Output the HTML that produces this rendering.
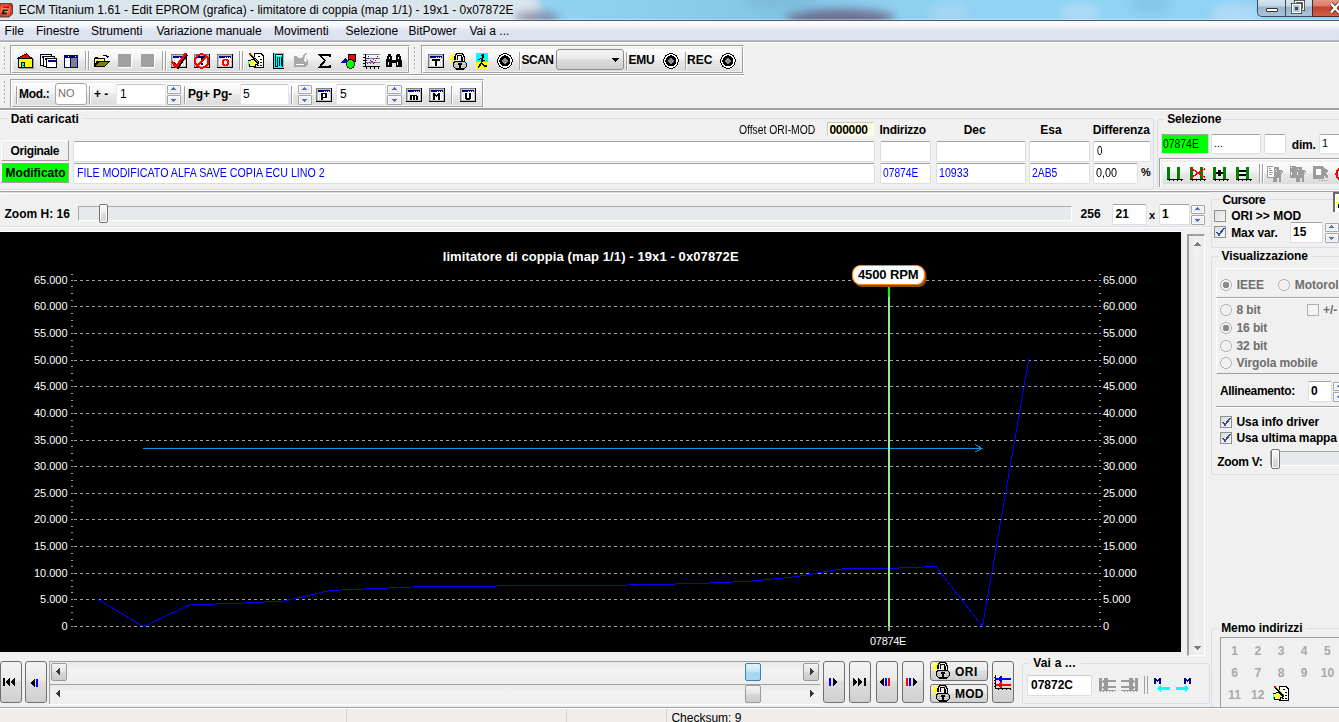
<!DOCTYPE html><html><head><meta charset="utf-8"><style>
*{margin:0;padding:0;box-sizing:border-box}
html,body{width:1339px;height:722px;overflow:hidden;background:#f0f0f0;position:relative;font-family:"Liberation Sans",sans-serif}
div{position:absolute}
.t{white-space:nowrap}
.fld{background:#fff;border:1px solid #dadde3;border-top-color:#a3a3a3;border-radius:2px}
.btn{border:1px solid #707070;border-radius:3px;background:linear-gradient(#f2f2f2 0%,#ebebeb 45%,#dddddd 50%,#cfcfcf 100%)}
.spin{border:1px solid #c9ccd2;border-radius:2px;background:linear-gradient(#f5f5f5,#e6e6e6)}
.grp{border:1px solid #d5dfe5;border-radius:3px}
</style></head><body><div style="left:0;top:0;width:1339px;height:20px;background:linear-gradient(90deg,#98d4f2 0px,#90d1f2 600px,#84c6e6 770px,#8fd0f0 900px,#8fd2f3 1000px,#90d3f4 1339px);overflow:hidden"><div style="left:1060px;top:2px;width:40px;height:22px;border-radius:50%;background:#b4dcf8;filter:blur(5px);opacity:.8"></div><div style="left:1130px;top:-6px;width:40px;height:20px;border-radius:50%;background:#7cc0e0;filter:blur(5px);opacity:.6"></div><div style="left:1210px;top:4px;width:50px;height:22px;border-radius:50%;background:#b8dcf8;filter:blur(5px);opacity:.8"></div><div style="left:930px;top:4px;width:40px;height:18px;border-radius:50%;background:#b0d8f6;filter:blur(5px);opacity:.7"></div><div style="left:-20px;top:-6px;width:560px;height:34px;border-radius:14px;background:#dbe6ec;filter:blur(4px)"></div><div style="left:515px;top:11px;width:45px;height:14px;border-radius:50%;background:#7a7a98;filter:blur(4px);opacity:.7"></div><div style="left:785px;top:9px;width:110px;height:18px;border-radius:50%;background:#6a5f80;filter:blur(5px);opacity:.85"></div><div style="left:740px;top:-8px;width:80px;height:18px;border-radius:50%;background:#78b4d4;filter:blur(6px);opacity:.6"></div><div style="left:0;top:19px;width:1339px;height:1px;background:rgba(255,255,255,.35)"></div></div>
<div style="left:0px;top:20px;width:1339px;height:1px;background:#4a5a68"></div>
<svg style="position:absolute;left:0;top:1px" width="14" height="17" viewBox="0 0 14 17"><defs><radialGradient id="ai" cx="0.45" cy="0.5" r="0.6"><stop offset="0" stop-color="#f8b090"/><stop offset="0.6" stop-color="#e85838"/><stop offset="1" stop-color="#c82818"/></radialGradient></defs><path d="M-1,2.5 H11.5 L12.5,4 V13 L9,16 H-1 Z" fill="url(#ai)" stroke="#333" stroke-width="0.8"/><rect x="3" y="5.5" width="6" height="1.5" fill="#e00010"/><polygon points="3,8.5 8,8.5 7.5,10 4.5,10 4,11.5 7,11.5 6.5,13.5 1.5,13.5" fill="#1a1a1a"/></svg>
<div class="t" style="left:18.7px;top:3.79px;font-size:12px;line-height:12px;font-weight:400;color:#000;">ECM Titanium 1.61 - Edit EPROM (grafica) - limitatore di coppia (map 1/1) - 19x1 - 0x07872E</div>
<div style="left:1257px;top:-2px;width:56px;height:19px;border:1px solid #3b4b5c;border-top:none;border-radius:0 0 0 5px;background:linear-gradient(#dbe8f1 0%,#c5d8e6 45%,#98b5cc 50%,#a9c3d6 100%)"></div>
<div style="left:1285px;top:0px;width:1px;height:17px;background:#3b4b5c"></div>
<div style="left:1312px;top:-2px;width:40px;height:19px;border:1px solid #4a2a20;border-top:none;background:linear-gradient(#e8a090 0%,#d97a66 45%,#c2412a 50%,#d06048 100%)"></div>
<div style="left:1266px;top:8px;width:12px;height:4px;background:#fff;border:1px solid #333;border-radius:1px"></div>
<svg style="position:absolute;left:1291px;top:0" width="15" height="14"><rect x="4.5" y="1.5" width="8" height="8" fill="none" stroke="#333" stroke-width="3"/><rect x="4.5" y="1.5" width="8" height="8" fill="none" stroke="#fff" stroke-width="1.4"/><rect x="1.5" y="4.5" width="8" height="8" fill="#a8c2d6" stroke="#333" stroke-width="3"/><rect x="1.5" y="4.5" width="8" height="8" fill="#a8c2d6" stroke="#fff" stroke-width="1.4"/><rect x="4" y="7" width="3" height="3" fill="#3a4a5a"/></svg>
<svg style="position:absolute;left:1328px;top:1px" width="11" height="14"><path d="M3,2.5 L11,11.5 M11,2.5 L3,11.5" stroke="#4a2a20" stroke-width="4"/><path d="M3,2.5 L11,11.5 M11,2.5 L3,11.5" stroke="#fff" stroke-width="2.4"/></svg>
<div style="left:0;top:21px;width:1339px;height:20px;background:linear-gradient(#fbfcfe 0%,#f2f4f9 30%,#dfe4f1 45%,#dce2ef 100%)"></div>
<div style="left:0px;top:40px;width:1339px;height:1px;background:#b6bcc6"></div>
<div class="t" style="left:4.6px;top:24.69px;font-size:12px;line-height:12px;font-weight:400;color:#000;">File</div>
<div class="t" style="left:36px;top:24.69px;font-size:12px;line-height:12px;font-weight:400;color:#000;">Finestre</div>
<div class="t" style="left:91px;top:24.69px;font-size:12px;line-height:12px;font-weight:400;color:#000;">Strumenti</div>
<div class="t" style="left:156.5px;top:24.69px;font-size:12px;line-height:12px;font-weight:400;color:#000;">Variazione manuale</div>
<div class="t" style="left:274px;top:24.69px;font-size:12px;line-height:12px;font-weight:400;color:#000;">Movimenti</div>
<div class="t" style="left:345.5px;top:24.69px;font-size:12px;line-height:12px;font-weight:400;color:#000;">Selezione</div>
<div class="t" style="left:408.5px;top:24.69px;font-size:12px;line-height:12px;font-weight:400;color:#000;">BitPower</div>
<div class="t" style="left:469.5px;top:24.69px;font-size:12px;line-height:12px;font-weight:400;color:#000;">Vai a ...</div>
<div style="left:0px;top:41px;width:1339px;height:1px;background:#a9a9a9"></div>
<div style="left:0px;top:42px;width:1339px;height:1px;background:#fff"></div>
<div style="left:4px;top:47px;width:1px;height:2px;background:#a8a8a8"></div>
<div style="left:5px;top:48px;width:1px;height:1px;background:#fff"></div>
<div style="left:4px;top:51px;width:1px;height:2px;background:#a8a8a8"></div>
<div style="left:5px;top:52px;width:1px;height:1px;background:#fff"></div>
<div style="left:4px;top:55px;width:1px;height:2px;background:#a8a8a8"></div>
<div style="left:5px;top:56px;width:1px;height:1px;background:#fff"></div>
<div style="left:4px;top:59px;width:1px;height:2px;background:#a8a8a8"></div>
<div style="left:5px;top:60px;width:1px;height:1px;background:#fff"></div>
<div style="left:4px;top:63px;width:1px;height:2px;background:#a8a8a8"></div>
<div style="left:5px;top:64px;width:1px;height:1px;background:#fff"></div>
<div style="left:4px;top:67px;width:1px;height:2px;background:#a8a8a8"></div>
<div style="left:5px;top:68px;width:1px;height:1px;background:#fff"></div>
<div style="left:10px;top:45px;width:400px;height:29px;border-left:1px solid #a0a0a0;border-top:1px solid #a0a0a0;border-right:1px solid #fff;border-bottom:1px solid #fff;box-shadow:inset 1px 1px 0 #fff, inset -1px -1px 0 #a0a0a0"></div>
<div style="left:14px;top:49px;width:393px;height:22px;background:linear-gradient(#fdfdfd 0%,#f3f3f3 45%,#e8e8e8 55%,#dcdcdc 100%)"></div>
<div style="left:414px;top:47px;width:1px;height:2px;background:#a8a8a8"></div>
<div style="left:415px;top:48px;width:1px;height:1px;background:#fff"></div>
<div style="left:414px;top:51px;width:1px;height:2px;background:#a8a8a8"></div>
<div style="left:415px;top:52px;width:1px;height:1px;background:#fff"></div>
<div style="left:414px;top:55px;width:1px;height:2px;background:#a8a8a8"></div>
<div style="left:415px;top:56px;width:1px;height:1px;background:#fff"></div>
<div style="left:414px;top:59px;width:1px;height:2px;background:#a8a8a8"></div>
<div style="left:415px;top:60px;width:1px;height:1px;background:#fff"></div>
<div style="left:414px;top:63px;width:1px;height:2px;background:#a8a8a8"></div>
<div style="left:415px;top:64px;width:1px;height:1px;background:#fff"></div>
<div style="left:414px;top:67px;width:1px;height:2px;background:#a8a8a8"></div>
<div style="left:415px;top:68px;width:1px;height:1px;background:#fff"></div>
<div style="left:421px;top:45px;width:323px;height:29px;border-left:1px solid #a0a0a0;border-top:1px solid #a0a0a0;border-right:1px solid #fff;border-bottom:1px solid #fff;box-shadow:inset 1px 1px 0 #fff, inset -1px -1px 0 #a0a0a0"></div>
<div style="left:425px;top:49px;width:315px;height:22px;background:linear-gradient(#fdfdfd 0%,#f3f3f3 45%,#e8e8e8 55%,#dcdcdc 100%)"></div>
<div style="left:0px;top:74px;width:744px;height:1px;background:#a0a0a0"></div>
<div style="left:0px;top:75px;width:744px;height:1px;background:#fff"></div>
<div style="left:4px;top:81px;width:1px;height:2px;background:#a8a8a8"></div>
<div style="left:5px;top:82px;width:1px;height:1px;background:#fff"></div>
<div style="left:4px;top:85px;width:1px;height:2px;background:#a8a8a8"></div>
<div style="left:5px;top:86px;width:1px;height:1px;background:#fff"></div>
<div style="left:4px;top:89px;width:1px;height:2px;background:#a8a8a8"></div>
<div style="left:5px;top:90px;width:1px;height:1px;background:#fff"></div>
<div style="left:4px;top:93px;width:1px;height:2px;background:#a8a8a8"></div>
<div style="left:5px;top:94px;width:1px;height:1px;background:#fff"></div>
<div style="left:4px;top:97px;width:1px;height:2px;background:#a8a8a8"></div>
<div style="left:5px;top:98px;width:1px;height:1px;background:#fff"></div>
<div style="left:4px;top:101px;width:1px;height:2px;background:#a8a8a8"></div>
<div style="left:5px;top:102px;width:1px;height:1px;background:#fff"></div>
<div style="left:10px;top:79px;width:474px;height:29px;border-left:1px solid #a0a0a0;border-top:1px solid #a0a0a0;border-right:1px solid #fff;border-bottom:1px solid #fff;box-shadow:inset 1px 1px 0 #fff, inset -1px -1px 0 #a0a0a0"></div>
<div style="left:14px;top:83px;width:467px;height:22px;background:linear-gradient(#fdfdfd 0%,#f3f3f3 45%,#e8e8e8 55%,#dcdcdc 100%)"></div>
<div style="left:0px;top:108px;width:1339px;height:2px;background:#a0a0a0"></div>
<div style="left:0px;top:110px;width:1339px;height:1px;background:#fff"></div>
<svg style="position:absolute;left:17px;top:53px;" width="17" height="16" viewBox="0 0 17 16" shape-rendering="crispEdges"><rect x="9" y="0" width="1" height="1" fill="#000"/><rect x="7" y="1" width="2" height="1" fill="#000"/><rect x="9" y="1" width="1" height="1" fill="#f00"/><rect x="10" y="1" width="1" height="1" fill="#000"/><rect x="5" y="2" width="2" height="1" fill="#000"/><rect x="7" y="2" width="4" height="1" fill="#f00"/><rect x="11" y="2" width="1" height="1" fill="#000"/><rect x="3" y="3" width="2" height="1" fill="#000"/><rect x="5" y="3" width="7" height="1" fill="#f00"/><rect x="12" y="3" width="1" height="1" fill="#000"/><rect x="1" y="4" width="2" height="1" fill="#000"/><rect x="3" y="4" width="10" height="1" fill="#f00"/><rect x="13" y="4" width="2" height="1" fill="#000"/><rect x="0" y="5" width="16" height="1" fill="#000"/><rect x="1" y="6" width="15" height="9" fill="#000"/><rect x="2" y="6" width="13" height="8" fill="#ff0"/><rect x="4" y="9" width="4" height="6" fill="#000"/><rect x="5" y="10" width="2" height="4" fill="#0ff"/><rect x="6" y="12" width="1" height="1" fill="#000"/><rect x="16" y="6" width="1" height="10" fill="#9a9a9a"/><rect x="2" y="15" width="15" height="1" fill="#9a9a9a"/></svg>
<svg style="position:absolute;left:40px;top:54px;" width="17" height="14" viewBox="0 0 17 14" shape-rendering="crispEdges"><rect x="0" y="0" width="12" height="12" fill="#000"/><rect x="1" y="1" width="10" height="10" fill="#fff"/><rect x="2" y="2" width="9" height="2" fill="#000080"/><rect x="3" y="2" width="12" height="11" fill="#000"/><rect x="4" y="3" width="10" height="9" fill="#fff"/><rect x="5" y="4" width="9" height="2" fill="#000080"/><rect x="6" y="4" width="11" height="10" fill="#000"/><rect x="7" y="5" width="9" height="8" fill="#fff"/><rect x="8" y="6" width="8" height="2" fill="#000080"/></svg>
<svg style="position:absolute;left:64px;top:55px;" width="14" height="13" viewBox="0 0 14 13" shape-rendering="crispEdges"><rect x="0" y="0" width="14" height="13" fill="#000080"/><rect x="1" y="3" width="5" height="9" fill="#fff"/><rect x="7" y="3" width="6" height="9" fill="#808080"/><rect x="4" y="1" width="1" height="1" fill="#fff"/><rect x="11" y="1" width="1" height="1" fill="#fff"/></svg>
<div style="left:85px;top:51px;width:1px;height:19px;background:#a0a0a0"></div>
<div style="left:86px;top:51px;width:1px;height:19px;background:#fff"></div>
<div style="left:88px;top:51px;width:1px;height:19px;background:#a0a0a0"></div>
<div style="left:89px;top:51px;width:1px;height:19px;background:#fff"></div>
<svg style="position:absolute;left:94px;top:54px;" width="17" height="14" viewBox="0 0 17 14" shape-rendering="crispEdges"><path d="M9,2 L10,1 H12 L13,2" fill="none" stroke="#000" stroke-width="1"/><polygon points="12,2 15,2 14,4 13,4" fill="#000"/><rect x="0" y="4" width="11" height="8" fill="#000"/><rect x="1" y="3" width="3" height="1" fill="#000"/><rect x="1" y="5" width="9" height="2" fill="#ffff60"/><polygon points="1,5 4,5 1,10" fill="#ffff60"/><polygon points="4,7 16,7 11,13 0,13" fill="#000"/><polygon points="5,8 14,8 10,12 2,12" fill="#808000"/></svg>
<div style="left:118px;top:54px;width:14px;height:14px;background:#a0a0a0;border-right:1px solid #fff;border-bottom:1px solid #fff"></div>
<div style="left:141px;top:54px;width:14px;height:14px;background:#a0a0a0;border-right:1px solid #fff;border-bottom:1px solid #fff"></div>
<div style="left:162px;top:51px;width:1px;height:19px;background:#a0a0a0"></div>
<div style="left:163px;top:51px;width:1px;height:19px;background:#fff"></div>
<div style="left:165px;top:51px;width:1px;height:19px;background:#a0a0a0"></div>
<div style="left:166px;top:51px;width:1px;height:19px;background:#fff"></div>
<svg style="position:absolute;left:171px;top:54px;" width="16" height="14" viewBox="0 0 16 14" shape-rendering="crispEdges"><rect x="0" y="0" width="16" height="14" fill="#000"/><rect x="0" y="0" width="15" height="13" fill="#808080"/><rect x="1" y="1" width="14" height="12" fill="#c0c0c0"/><rect x="2" y="2" width="12" height="10" fill="#fff"/><rect x="3" y="4" width="1" height="8" fill="#e4e4e4"/><rect x="12" y="4" width="1" height="8" fill="#e4e4e4"/><rect x="2" y="2" width="12" height="2" fill="#000080"/><rect x="8" y="3" width="1" height="1" fill="#fff"/><rect x="10" y="3" width="1" height="1" fill="#fff"/><rect x="12" y="3" width="1" height="1" fill="#fff"/></svg>
<svg style="position:absolute;left:171px;top:52px;" width="17" height="17" viewBox="0 0 17 17" shape-rendering="crispEdges"><path d="M2,10 L6,15 L15,2" fill="none" stroke="#000" stroke-width="2.2" transform="translate(1,0.5)"/><path d="M1,9.5 L5,15 L15,1" fill="none" stroke="#f00" stroke-width="2.4"/></svg>
<svg style="position:absolute;left:194px;top:54px;" width="16" height="14" viewBox="0 0 16 14" shape-rendering="crispEdges"><rect x="0" y="0" width="16" height="14" fill="#000"/><rect x="0" y="0" width="15" height="13" fill="#808080"/><rect x="1" y="1" width="14" height="12" fill="#c0c0c0"/><rect x="2" y="2" width="12" height="10" fill="#fff"/><rect x="3" y="4" width="1" height="8" fill="#e4e4e4"/><rect x="12" y="4" width="1" height="8" fill="#e4e4e4"/><rect x="2" y="2" width="12" height="2" fill="#000080"/><rect x="8" y="3" width="1" height="1" fill="#fff"/><rect x="10" y="3" width="1" height="1" fill="#fff"/><rect x="12" y="3" width="1" height="1" fill="#fff"/><rect x="7" y="2" width="2" height="6" fill="#000"/><rect x="7" y="9" width="2" height="2" fill="#000"/></svg>
<svg style="position:absolute;left:193px;top:52px;" width="18" height="18" viewBox="0 0 18 18" shape-rendering="crispEdges"><circle cx="8.8" cy="9" r="6.8" fill="none" stroke="#f00" stroke-width="2"/><line x1="4" y1="14" x2="13.5" y2="4.5" stroke="#f00" stroke-width="2"/></svg>
<svg style="position:absolute;left:217px;top:54px;" width="16" height="14" viewBox="0 0 16 14" shape-rendering="crispEdges"><rect x="0" y="0" width="16" height="14" fill="#000"/><rect x="0" y="0" width="15" height="13" fill="#808080"/><rect x="1" y="1" width="14" height="12" fill="#c0c0c0"/><rect x="2" y="2" width="12" height="10" fill="#fff"/><rect x="3" y="4" width="1" height="8" fill="#e4e4e4"/><rect x="12" y="4" width="1" height="8" fill="#e4e4e4"/><rect x="2" y="2" width="12" height="2" fill="#000080"/><rect x="8" y="3" width="1" height="1" fill="#fff"/><rect x="10" y="3" width="1" height="1" fill="#fff"/><rect x="12" y="3" width="1" height="1" fill="#fff"/><rect x="6" y="5" width="5" height="1" fill="#f00"/><rect x="5" y="6" width="3" height="1" fill="#f00"/><rect x="9" y="6" width="3" height="1" fill="#f00"/><rect x="5" y="7" width="2" height="1" fill="#f00"/><rect x="10" y="7" width="2" height="1" fill="#f00"/><rect x="5" y="8" width="2" height="1" fill="#f00"/><rect x="10" y="8" width="2" height="1" fill="#f00"/><rect x="5" y="9" width="2" height="1" fill="#f00"/><rect x="10" y="9" width="2" height="1" fill="#f00"/><rect x="5" y="10" width="3" height="1" fill="#f00"/><rect x="9" y="10" width="3" height="1" fill="#f00"/><rect x="6" y="11" width="5" height="1" fill="#f00"/></svg>
<div style="left:239px;top:51px;width:1px;height:19px;background:#a0a0a0"></div>
<div style="left:240px;top:51px;width:1px;height:19px;background:#fff"></div>
<div style="left:242px;top:51px;width:1px;height:19px;background:#a0a0a0"></div>
<div style="left:243px;top:51px;width:1px;height:19px;background:#fff"></div>
<svg style="position:absolute;left:248px;top:53px;" width="17" height="16" viewBox="0 0 17 16" shape-rendering="crispEdges"><polygon points="6,0 13,0 16,3 16,15 6,15" fill="#000"/><polygon points="7,1 12,1 15,4 15,14 7,14" fill="#fff"/><g fill="#000"><rect x="10" y="3" width="2" height="1"/><rect x="12" y="6" width="2" height="1"/><rect x="12" y="9" width="2" height="1"/><rect x="9" y="12" width="2" height="1"/><rect x="12" y="12" width="2" height="1"/></g><polygon points="0,7 5,6 12,11 8,12 8,14 1,14" fill="#000"/><polygon points="1,8 5,7 10,11 7,11 7,13 2,13" fill="#ffff40"/><rect x="0" y="8" width="1" height="5" fill="#0ff"/><line x1="2" y1="1" x2="11" y2="10" stroke="#000" stroke-width="1.6"/><line x1="2.5" y1="1" x2="10.5" y2="9" stroke="#ff0" stroke-width="0.8"/><rect x="1" y="0" width="2" height="2" fill="#f00"/></svg>
<svg style="position:absolute;left:273px;top:53px;" width="11" height="16" viewBox="0 0 11 16" shape-rendering="crispEdges"><rect x="0" y="0" width="11" height="16" fill="#000"/><rect x="1" y="0" width="10" height="15" fill="#0ff"/><rect x="2" y="1" width="8" height="13" fill="#000"/><rect x="3" y="2" width="6" height="1" fill="#ff0"/><rect x="3" y="3" width="6" height="11" fill="#0ff"/><rect x="4" y="4" width="1" height="9" fill="#000"/><rect x="6" y="4" width="1" height="9" fill="#000"/><rect x="8" y="4" width="1" height="9" fill="#000"/><rect x="3" y="13" width="2" height="1" fill="#000"/></svg>
<svg style="position:absolute;left:293px;top:53px;" width="17" height="16" viewBox="0 0 17 16" shape-rendering="crispEdges"><polygon points="1,3 4,3 5,5 9,5 12,0 14,0 11,5 13,6 15,7 15,11 13,13 13,14 1,14" fill="#a8a8a8"/><rect x="3" y="11" width="8" height="1" fill="#fff"/><polygon points="11,6 14,7 13,10 12,9" fill="#fff"/></svg>
<svg style="position:absolute;left:318px;top:54px;" width="13" height="14" viewBox="0 0 13 14" shape-rendering="crispEdges"><path d="M12,3 V1 H1.5 L7,6.8 L1.5,12.8 H12 V10.5" fill="none" stroke="#000" stroke-width="1.7" stroke-linejoin="miter"/></svg>
<svg style="position:absolute;left:340px;top:53px;" width="17" height="16" viewBox="0 0 17 16" shape-rendering="crispEdges"><rect x="8" y="1" width="8" height="8" fill="#000"/><rect x="9" y="2" width="6" height="6" fill="#f00"/><polygon points="0,10 6,5 8,10" fill="#000"/><polygon points="1.5,9.5 6,5.8 7,9.5" fill="#00f"/><circle cx="10.5" cy="11" r="4.3" fill="#0f0" stroke="#000" stroke-width="0.8"/></svg>
<svg style="position:absolute;left:363px;top:53px;" width="17" height="17" viewBox="0 0 17 17" shape-rendering="crispEdges"><g fill="#808080"><rect x="0" y="1" width="17" height="1"/><rect x="3" y="5" width="14" height="1"/><rect x="3" y="9" width="14" height="1"/><rect x="0" y="13" width="17" height="1"/></g><rect x="2" y="1" width="1" height="13" fill="#000"/><rect x="0" y="13" width="17" height="1" fill="#000"/><g fill="#000"><rect x="0" y="4" width="2" height="1"/><rect x="0" y="7" width="2" height="1"/><rect x="0" y="10" width="2" height="1"/><rect x="3" y="14" width="1" height="2"/><rect x="7" y="14" width="1" height="2"/><rect x="11" y="14" width="1" height="2"/><rect x="15" y="14" width="1" height="2"/></g><g fill="#00f"><rect x="5" y="3" width="1" height="1"/><rect x="4" y="5" width="2" height="1"/><rect x="3" y="7" width="1" height="1"/><rect x="7" y="7" width="1" height="1"/><rect x="8" y="8" width="1" height="1"/><rect x="10" y="10" width="1" height="1"/><rect x="11" y="9" width="1" height="1"/><rect x="13" y="5" width="1" height="1"/><rect x="14" y="3" width="1" height="1"/></g><g fill="#f00"><rect x="4" y="10" width="1" height="1"/><rect x="6" y="9" width="1" height="1"/><rect x="7" y="10" width="1" height="1"/><rect x="9" y="8" width="1" height="1"/><rect x="10" y="6" width="1" height="1"/><rect x="12" y="7" width="1" height="1"/><rect x="14" y="5" width="1" height="1"/></g></svg>
<svg style="position:absolute;left:386px;top:54px;" width="16" height="13" viewBox="0 0 16 13" shape-rendering="crispEdges"><polygon points="2,0 5,0 6,3 6,6 10,6 10,3 11,0 14,0 15,4 16,7 16,13 10,13 10,9 6,9 6,13 0,13 0,7 1,4" fill="#000"/><rect x="2" y="8" width="1" height="3" fill="#fff"/><rect x="11" y="8" width="1" height="3" fill="#fff"/><rect x="3" y="3" width="1" height="2" fill="#fff"/><rect x="12" y="3" width="1" height="2" fill="#fff"/></svg>
<svg style="position:absolute;left:428px;top:54px;" width="16" height="14" viewBox="0 0 16 14" shape-rendering="crispEdges"><rect x="0" y="0" width="16" height="14" fill="#000"/><rect x="0" y="0" width="15" height="13" fill="#808080"/><rect x="1" y="1" width="14" height="12" fill="#c0c0c0"/><rect x="2" y="2" width="12" height="10" fill="#fff"/><rect x="3" y="4" width="1" height="8" fill="#e4e4e4"/><rect x="12" y="4" width="1" height="8" fill="#e4e4e4"/><rect x="2" y="2" width="12" height="2" fill="#000080"/><rect x="8" y="3" width="1" height="1" fill="#fff"/><rect x="10" y="3" width="1" height="1" fill="#fff"/><rect x="12" y="3" width="1" height="1" fill="#fff"/><rect x="4" y="5" width="8" height="1" fill="#000"/><rect x="4" y="6" width="8" height="1" fill="#000"/><rect x="7" y="7" width="2" height="1" fill="#000"/><rect x="7" y="8" width="2" height="1" fill="#000"/><rect x="7" y="9" width="2" height="1" fill="#000"/><rect x="7" y="10" width="2" height="1" fill="#000"/><rect x="7" y="11" width="2" height="1" fill="#000"/></svg>
<svg style="position:absolute;left:449px;top:52px;" width="18" height="19" viewBox="0 0 18 19" shape-rendering="crispEdges"><g stroke="#ff0" stroke-width="1.2"><line x1="4.5" y1="1" x2="4.5" y2="7.5"/><line x1="0" y1="7" x2="4.5" y2="7"/><line x1="1" y1="2.5" x2="4.5" y2="6.5"/><line x1="1" y1="11" x2="4.5" y2="7.5"/></g><path d="M7,8 V5 Q7,2.5 9.5,2.5 H11.5 Q14,2.5 14,5 V9.5" fill="none" stroke="#000" stroke-width="3.2"/><path d="M7,7.5 V5 Q7,2.5 9.5,2.5 H11.5 Q14,2.5 14,5 V9.5" fill="none" stroke="#e8e8e8" stroke-width="1"/><polygon points="5.5,9.5 15.5,9.5 17.5,11.5 17.5,14.5 15,17 7,17 4.5,14.5 4.5,11.5" fill="#b4b4b4" stroke="#000" stroke-width="1.3"/><g fill="#dcdcdc"><rect x="6" y="11" width="10" height="1"/><rect x="6" y="13" width="10" height="1"/><rect x="7" y="15" width="8" height="1"/></g><rect x="9" y="11" width="4" height="2" fill="#000"/><rect x="10" y="12.5" width="2" height="3.5" fill="#000"/></svg>
<svg style="position:absolute;left:476px;top:53px;" width="12" height="16" viewBox="0 0 12 16" shape-rendering="crispEdges"><rect x="0" y="0" width="12" height="9" fill="#0ff"/><rect x="0" y="9" width="12" height="7" fill="#ff0"/><circle cx="7" cy="2.5" r="1.5" fill="#000"/><polyline points="7,4 5.5,10 2,14.5" fill="none" stroke="#000" stroke-width="1.6"/><polyline points="5.5,10 9,13 11,13" fill="none" stroke="#000" stroke-width="1.6"/><polyline points="2,7 5,5.5 6.5,7.5 9,7.5" fill="none" stroke="#000" stroke-width="1.2"/></svg>
<svg style="position:absolute;left:497px;top:53px;" width="16" height="16" viewBox="0 0 16 16" shape-rendering="crispEdges"><circle cx="8" cy="8" r="7.3" fill="#fff" stroke="#000" stroke-width="1"/><circle cx="8" cy="8" r="5.6" fill="#000"/><circle cx="8" cy="8" r="2.7" fill="#8c8c8c"/></svg>
<div style="left:519px;top:52px;width:1px;height:18px;background:#a0a0a0"></div>
<div style="left:520px;top:52px;width:1px;height:18px;background:#fff"></div>
<div class="t" style="left:521.5px;top:53.59px;font-size:12px;line-height:12px;font-weight:700;color:#000;letter-spacing:-0.5px">SCAN</div>
<div style="left:556px;top:49px;width:68px;height:21px;border:1px solid #8e8f8f;border-radius:3px;background:linear-gradient(#f2f2f2 0%,#ebebeb 45%,#dddddd 50%,#cfcfcf 100%)"></div>
<svg style="position:absolute;left:612px;top:58px;" width="8" height="4" viewBox="0 0 8 4" shape-rendering="crispEdges"><polygon points="0,0 7,0 3.5,4" fill="#000"/></svg>
<div style="left:626px;top:52px;width:1px;height:18px;background:#a0a0a0"></div>
<div style="left:627px;top:52px;width:1px;height:18px;background:#fff"></div>
<div class="t" style="left:628.6px;top:53.59px;font-size:12px;line-height:12px;font-weight:700;color:#000;letter-spacing:-0.3px">EMU</div>
<svg style="position:absolute;left:663px;top:53px;" width="16" height="16" viewBox="0 0 16 16" shape-rendering="crispEdges"><circle cx="8" cy="8" r="7.3" fill="#fff" stroke="#000" stroke-width="1"/><circle cx="8" cy="8" r="5.6" fill="#000"/><circle cx="8" cy="8" r="2.7" fill="#8c8c8c"/></svg>
<div style="left:685px;top:52px;width:1px;height:18px;background:#a0a0a0"></div>
<div style="left:686px;top:52px;width:1px;height:18px;background:#fff"></div>
<div class="t" style="left:687px;top:53.59px;font-size:12px;line-height:12px;font-weight:700;color:#000;">REC</div>
<svg style="position:absolute;left:720px;top:53px;" width="16" height="16" viewBox="0 0 16 16" shape-rendering="crispEdges"><circle cx="8" cy="8" r="7.3" fill="#fff" stroke="#000" stroke-width="1"/><circle cx="8" cy="8" r="5.6" fill="#000"/><circle cx="8" cy="8" r="2.7" fill="#8c8c8c"/></svg>
<div style="left:16px;top:86px;width:1px;height:18px;background:#a0a0a0"></div>
<div style="left:17px;top:86px;width:1px;height:18px;background:#fff"></div>
<div class="t" style="left:19px;top:88.29px;font-size:12px;line-height:12px;font-weight:700;color:#000;letter-spacing:-0.3px">Mod.:</div>
<div style="left:55px;top:83px;width:32px;height:22px;background:#fff;border:1px solid #a8a8a8;border-radius:3px"></div>
<div class="t" style="left:58px;top:87.71px;font-size:11px;line-height:11px;font-weight:400;color:#6d6d6d;">NO</div>
<div style="left:89px;top:86px;width:1px;height:18px;background:#a0a0a0"></div>
<div style="left:90px;top:86px;width:1px;height:18px;background:#fff"></div>
<div class="t" style="left:94px;top:88.29px;font-size:12px;line-height:12px;font-weight:700;color:#000;">+ -</div>
<div style="left:116px;top:84px;width:50px;height:21px;background:#fff;border:1px solid #e3e6ea;border-top-color:#c0c3c8;border-radius:2px"></div>
<div class="t" style="left:120px;top:88.29px;font-size:12px;line-height:12px;font-weight:400;color:#000;">1</div>
<div style="left:167px;top:85px;width:14px;height:9px;border:1px solid #a4a6aa;border-radius:1px;background:linear-gradient(#f4f4f4,#e8e8e8);box-shadow:inset 0 0 0 1px #fafafa"></div>
<div style="left:167px;top:95px;width:14px;height:10px;border:1px solid #a4a6aa;border-radius:1px;background:linear-gradient(#f4f4f4,#e8e8e8);box-shadow:inset 0 0 0 1px #fafafa"></div>
<svg style="position:absolute;left:170px;top:87px;" width="7" height="4" viewBox="0 0 7 4" shape-rendering="crispEdges"><rect x="3" y="0" width="1" height="1" fill="#5070c0"/><rect x="2" y="1" width="3" height="1" fill="#5070c0"/><rect x="1" y="2" width="5" height="1" fill="#5070c0"/></svg>
<svg style="position:absolute;left:170px;top:99px;" width="7" height="4" viewBox="0 0 7 4" shape-rendering="crispEdges"><rect x="1" y="0" width="5" height="1" fill="#5070c0"/><rect x="2" y="1" width="3" height="1" fill="#5070c0"/><rect x="3" y="2" width="1" height="1" fill="#5070c0"/></svg>
<div style="left:184px;top:86px;width:1px;height:18px;background:#a0a0a0"></div>
<div style="left:185px;top:86px;width:1px;height:18px;background:#fff"></div>
<div class="t" style="left:188px;top:88.29px;font-size:12px;line-height:12px;font-weight:700;color:#000;letter-spacing:-0.15px">Pg+ Pg-</div>
<div style="left:240px;top:84px;width:49px;height:21px;background:#fff;border:1px solid #e3e6ea;border-top-color:#c0c3c8;border-radius:2px"></div>
<div class="t" style="left:243px;top:88.29px;font-size:12px;line-height:12px;font-weight:400;color:#000;">5</div>
<div style="left:291px;top:86px;width:1px;height:18px;background:#a0a0a0"></div>
<div style="left:292px;top:86px;width:1px;height:18px;background:#fff"></div>
<div style="left:298px;top:85px;width:14px;height:9px;border:1px solid #a4a6aa;border-radius:1px;background:linear-gradient(#f4f4f4,#e8e8e8);box-shadow:inset 0 0 0 1px #fafafa"></div>
<div style="left:298px;top:95px;width:14px;height:10px;border:1px solid #a4a6aa;border-radius:1px;background:linear-gradient(#f4f4f4,#e8e8e8);box-shadow:inset 0 0 0 1px #fafafa"></div>
<svg style="position:absolute;left:301px;top:87px;" width="7" height="4" viewBox="0 0 7 4" shape-rendering="crispEdges"><rect x="3" y="0" width="1" height="1" fill="#5070c0"/><rect x="2" y="1" width="3" height="1" fill="#5070c0"/><rect x="1" y="2" width="5" height="1" fill="#5070c0"/></svg>
<svg style="position:absolute;left:301px;top:99px;" width="7" height="4" viewBox="0 0 7 4" shape-rendering="crispEdges"><rect x="1" y="0" width="5" height="1" fill="#5070c0"/><rect x="2" y="1" width="3" height="1" fill="#5070c0"/><rect x="3" y="2" width="1" height="1" fill="#5070c0"/></svg>
<svg style="position:absolute;left:316px;top:88px;" width="16" height="14" viewBox="0 0 16 14" shape-rendering="crispEdges"><rect x="0" y="0" width="16" height="14" fill="#000"/><rect x="0" y="0" width="15" height="13" fill="#808080"/><rect x="1" y="1" width="14" height="12" fill="#c0c0c0"/><rect x="2" y="2" width="12" height="10" fill="#fff"/><rect x="3" y="4" width="1" height="8" fill="#e4e4e4"/><rect x="12" y="4" width="1" height="8" fill="#e4e4e4"/><rect x="2" y="2" width="12" height="2" fill="#000080"/><rect x="8" y="3" width="1" height="1" fill="#fff"/><rect x="10" y="3" width="1" height="1" fill="#fff"/><rect x="12" y="3" width="1" height="1" fill="#fff"/><rect x="5" y="5" width="6" height="1" fill="#000"/><rect x="5" y="6" width="2" height="1" fill="#000"/><rect x="9" y="6" width="2" height="1" fill="#000"/><rect x="5" y="7" width="2" height="1" fill="#000"/><rect x="9" y="7" width="2" height="1" fill="#000"/><rect x="5" y="8" width="2" height="1" fill="#000"/><rect x="9" y="8" width="2" height="1" fill="#000"/><rect x="5" y="9" width="6" height="1" fill="#000"/><rect x="5" y="10" width="2" height="1" fill="#000"/><rect x="5" y="11" width="2" height="1" fill="#000"/></svg>
<div style="left:336px;top:84px;width:50px;height:21px;background:#fff;border:1px solid #e3e6ea;border-top-color:#c0c3c8;border-radius:2px"></div>
<div class="t" style="left:340px;top:88.29px;font-size:12px;line-height:12px;font-weight:400;color:#000;">5</div>
<div style="left:387px;top:85px;width:15px;height:9px;border:1px solid #a4a6aa;border-radius:1px;background:linear-gradient(#f4f4f4,#e8e8e8);box-shadow:inset 0 0 0 1px #fafafa"></div>
<div style="left:387px;top:95px;width:15px;height:10px;border:1px solid #a4a6aa;border-radius:1px;background:linear-gradient(#f4f4f4,#e8e8e8);box-shadow:inset 0 0 0 1px #fafafa"></div>
<svg style="position:absolute;left:391px;top:87px;" width="7" height="4" viewBox="0 0 7 4" shape-rendering="crispEdges"><rect x="3" y="0" width="1" height="1" fill="#5070c0"/><rect x="2" y="1" width="3" height="1" fill="#5070c0"/><rect x="1" y="2" width="5" height="1" fill="#5070c0"/></svg>
<svg style="position:absolute;left:391px;top:99px;" width="7" height="4" viewBox="0 0 7 4" shape-rendering="crispEdges"><rect x="1" y="0" width="5" height="1" fill="#5070c0"/><rect x="2" y="1" width="3" height="1" fill="#5070c0"/><rect x="3" y="2" width="1" height="1" fill="#5070c0"/></svg>
<svg style="position:absolute;left:406px;top:88px;" width="16" height="14" viewBox="0 0 16 14" shape-rendering="crispEdges"><rect x="0" y="0" width="16" height="14" fill="#000"/><rect x="0" y="0" width="15" height="13" fill="#808080"/><rect x="1" y="1" width="14" height="12" fill="#c0c0c0"/><rect x="2" y="2" width="12" height="10" fill="#fff"/><rect x="3" y="4" width="1" height="8" fill="#e4e4e4"/><rect x="12" y="4" width="1" height="8" fill="#e4e4e4"/><rect x="2" y="2" width="12" height="2" fill="#000080"/><rect x="8" y="3" width="1" height="1" fill="#fff"/><rect x="10" y="3" width="1" height="1" fill="#fff"/><rect x="12" y="3" width="1" height="1" fill="#fff"/><rect x="4" y="7" width="7" height="1" fill="#000"/><rect x="4" y="8" width="2" height="1" fill="#000"/><rect x="7" y="8" width="2" height="1" fill="#000"/><rect x="10" y="8" width="2" height="1" fill="#000"/><rect x="4" y="9" width="2" height="1" fill="#000"/><rect x="7" y="9" width="2" height="1" fill="#000"/><rect x="10" y="9" width="2" height="1" fill="#000"/><rect x="4" y="10" width="2" height="1" fill="#000"/><rect x="7" y="10" width="2" height="1" fill="#000"/><rect x="10" y="10" width="2" height="1" fill="#000"/><rect x="4" y="11" width="2" height="1" fill="#000"/><rect x="7" y="11" width="2" height="1" fill="#000"/><rect x="10" y="11" width="2" height="1" fill="#000"/></svg>
<svg style="position:absolute;left:429px;top:88px;" width="16" height="14" viewBox="0 0 16 14" shape-rendering="crispEdges"><rect x="0" y="0" width="16" height="14" fill="#000"/><rect x="0" y="0" width="15" height="13" fill="#808080"/><rect x="1" y="1" width="14" height="12" fill="#c0c0c0"/><rect x="2" y="2" width="12" height="10" fill="#fff"/><rect x="3" y="4" width="1" height="8" fill="#e4e4e4"/><rect x="12" y="4" width="1" height="8" fill="#e4e4e4"/><rect x="2" y="2" width="12" height="2" fill="#000080"/><rect x="8" y="3" width="1" height="1" fill="#fff"/><rect x="10" y="3" width="1" height="1" fill="#fff"/><rect x="12" y="3" width="1" height="1" fill="#fff"/><rect x="4" y="5" width="2" height="1" fill="#000"/><rect x="9" y="5" width="2" height="1" fill="#000"/><rect x="4" y="6" width="3" height="1" fill="#000"/><rect x="8" y="6" width="3" height="1" fill="#000"/><rect x="4" y="7" width="7" height="1" fill="#000"/><rect x="4" y="8" width="2" height="1" fill="#000"/><rect x="7" y="8" width="1" height="1" fill="#000"/><rect x="9" y="8" width="2" height="1" fill="#000"/><rect x="4" y="9" width="2" height="1" fill="#000"/><rect x="9" y="9" width="2" height="1" fill="#000"/><rect x="4" y="10" width="2" height="1" fill="#000"/><rect x="9" y="10" width="2" height="1" fill="#000"/><rect x="4" y="11" width="2" height="1" fill="#000"/><rect x="9" y="11" width="2" height="1" fill="#000"/></svg>
<div style="left:451px;top:86px;width:1px;height:18px;background:#a0a0a0"></div>
<div style="left:452px;top:86px;width:1px;height:18px;background:#fff"></div>
<svg style="position:absolute;left:460px;top:88px;" width="16" height="14" viewBox="0 0 16 14" shape-rendering="crispEdges"><rect x="0" y="0" width="16" height="14" fill="#000"/><rect x="0" y="0" width="15" height="13" fill="#808080"/><rect x="1" y="1" width="14" height="12" fill="#c0c0c0"/><rect x="2" y="2" width="12" height="10" fill="#fff"/><rect x="3" y="4" width="1" height="8" fill="#e4e4e4"/><rect x="12" y="4" width="1" height="8" fill="#e4e4e4"/><rect x="2" y="2" width="12" height="2" fill="#000080"/><rect x="8" y="3" width="1" height="1" fill="#fff"/><rect x="10" y="3" width="1" height="1" fill="#fff"/><rect x="12" y="3" width="1" height="1" fill="#fff"/><rect x="5" y="5" width="2" height="1" fill="#000"/><rect x="9" y="5" width="2" height="1" fill="#000"/><rect x="5" y="6" width="2" height="1" fill="#000"/><rect x="9" y="6" width="2" height="1" fill="#000"/><rect x="5" y="7" width="2" height="1" fill="#000"/><rect x="9" y="7" width="2" height="1" fill="#000"/><rect x="5" y="8" width="2" height="1" fill="#000"/><rect x="9" y="8" width="2" height="1" fill="#000"/><rect x="5" y="9" width="2" height="1" fill="#000"/><rect x="9" y="9" width="2" height="1" fill="#000"/><rect x="5" y="10" width="6" height="1" fill="#000"/><rect x="6" y="11" width="4" height="1" fill="#000"/></svg>
<div style="left:-2px;top:118px;width:1156px;height:72px;border:1px solid #d5dfe5;border-radius:3px"></div>
<div style="left:8px;top:113px;width:76px;height:10px;background:#f0f0f0"></div>
<div class="t" style="left:10.7px;top:112.59px;font-size:12px;line-height:12px;font-weight:700;color:#000;">Dati caricati</div>
<div style="left:1px;top:140px;width:68px;height:21px;border:1px solid #fff;border-right-color:#a0a0a0;border-bottom-color:#a0a0a0;background:#f0f0f0"></div>
<div class="t" style="left:10.6px;top:145.09px;font-size:12px;line-height:12px;font-weight:700;color:#000;letter-spacing:-0.4px;transform:scaleX(1.0)">Originale</div>
<div style="left:1px;top:162px;width:68px;height:21px;border:1px solid #fff;border-right-color:#a0a0a0;border-bottom-color:#a0a0a0;background:#00ff00"></div>
<div class="t" style="left:5.6px;top:166.79px;font-size:12px;line-height:12px;font-weight:700;color:#000;">Modificato</div>
<div style="left:73px;top:141px;width:802px;height:21px;"></div>
<div class="fld" style="left:73px;top:141px;width:802px;height:21px"></div>
<div class="fld" style="left:73px;top:163px;width:802px;height:21px"></div>
<div class="t" style="left:76.6px;top:166.55px;font-size:12.3px;line-height:12.3px;font-weight:400;color:#0000ff;transform:scaleX(0.8670);transform-origin:0 0;">FILE MODIFICATO ALFA SAVE COPIA ECU LINO 2</div>
<div class="t" style="left:738.8px;top:123.79px;font-size:12px;line-height:12px;font-weight:400;color:#000;transform:scaleX(0.8615);transform-origin:0 0;">Offset ORI-MOD</div>
<div style="left:827px;top:122px;width:47px;height:14px;background:#ffffe1;border-left:1px solid #c8c8c8;border-top:1px solid #c8c8c8"></div>
<div class="t" style="left:829.5px;top:123.99px;font-size:12px;line-height:12px;font-weight:700;color:#000;letter-spacing:-0.3px">000000</div>
<div class="t" style="left:879.5px;top:123.99px;font-size:12px;line-height:12px;font-weight:700;color:#000;letter-spacing:-0.25px">Indirizzo</div>
<div class="t" style="left:963.7px;top:123.99px;font-size:12px;line-height:12px;font-weight:700;color:#000;">Dec</div>
<div class="t" style="left:1040.3px;top:123.99px;font-size:12px;line-height:12px;font-weight:700;color:#000;">Esa</div>
<div class="t" style="left:1092.7px;top:123.99px;font-size:12px;line-height:12px;font-weight:700;color:#000;letter-spacing:-0.1px">Differenza</div>
<div class="fld" style="left:879.5px;top:141px;width:51.5px;height:21px"></div>
<div class="fld" style="left:935.5px;top:141px;width:90.5px;height:21px"></div>
<div class="fld" style="left:1028.5px;top:141px;width:61.5px;height:21px"></div>
<div class="fld" style="left:1093px;top:141px;width:58px;height:21px"></div>
<div class="fld" style="left:879.5px;top:163px;width:51.5px;height:21px"></div>
<div class="fld" style="left:935.5px;top:163px;width:90.5px;height:21px"></div>
<div class="fld" style="left:1028.5px;top:163px;width:61.5px;height:21px"></div>
<div class="fld" style="left:1093px;top:163px;width:45px;height:21px"></div>
<div class="t" style="left:1096.7px;top:145.05px;font-size:12.3px;line-height:12.3px;font-weight:400;color:#000;transform:scaleX(0.7895);transform-origin:0 0;">0</div>
<div class="t" style="left:882.8px;top:166.55px;font-size:12.3px;line-height:12.3px;font-weight:400;color:#0000ff;transform:scaleX(0.8325);transform-origin:0 0;">07874E</div>
<div class="t" style="left:938.6px;top:166.55px;font-size:12.3px;line-height:12.3px;font-weight:400;color:#0000ff;transform:scaleX(0.8655);transform-origin:0 0;">10933</div>
<div class="t" style="left:1031.8px;top:166.55px;font-size:12.3px;line-height:12.3px;font-weight:400;color:#0000ff;transform:scaleX(0.8442);transform-origin:0 0;">2AB5</div>
<div class="t" style="left:1096.3px;top:166.55px;font-size:12.3px;line-height:12.3px;font-weight:400;color:#000;transform:scaleX(0.8773);transform-origin:0 0;">0,00</div>
<div class="t" style="left:1141px;top:167.21px;font-size:11px;line-height:11px;font-weight:700;color:#000;">%</div>
<div style="left:1157px;top:119px;width:190px;height:71px;border:1px solid #d5dfe5;border-radius:3px"></div>
<div style="left:1164px;top:113px;width:60px;height:10px;background:#f0f0f0"></div>
<div class="t" style="left:1167.2px;top:113.29px;font-size:12px;line-height:12px;font-weight:700;color:#000;letter-spacing:-0.15px">Selezione</div>
<div style="left:1161px;top:134px;width:48px;height:20px;background:#00ff00;border:1px solid #dadde3;border-top-color:#a3a3a3"></div>
<div class="t" style="left:1163.4px;top:137.79px;font-size:12px;line-height:12px;font-weight:400;color:#000;transform:scaleX(0.8654);transform-origin:0 0;">07874E</div>
<div class="fld" style="left:1211px;top:134px;width:50px;height:20px"></div>
<div class="t" style="left:1214px;top:137.91px;font-size:11px;line-height:11px;font-weight:400;color:#000;">...</div>
<div class="fld" style="left:1264px;top:134px;width:22px;height:20px"></div>
<div class="t" style="left:1291.8px;top:138.99px;font-size:12px;line-height:12px;font-weight:700;color:#000;letter-spacing:-0.2px">dim.</div>
<div class="fld" style="left:1319px;top:134px;width:30px;height:20px"></div>
<div class="t" style="left:1322px;top:137.91px;font-size:11px;line-height:11px;font-weight:400;color:#000;">1</div>
<div style="left:1159px;top:158px;width:190px;height:29px;border-left:1px solid #a0a0a0;border-top:1px solid #a0a0a0;box-shadow:inset 1px 1px 0 #fff"></div>
<div style="left:1163px;top:162px;width:186px;height:22px;background:linear-gradient(#fdfdfd 0%,#f3f3f3 45%,#e8e8e8 55%,#dcdcdc 100%)"></div>
<svg style="position:absolute;left:1167px;top:167px;" width="17" height="15" viewBox="0 0 17 15" shape-rendering="crispEdges"><rect x="0" y="0" width="3" height="12" fill="#008000"/><rect x="10" y="0" width="3" height="12" fill="#008000"/><rect x="0" y="12" width="16" height="1" fill="#000"/><g fill="#000"><rect x="2" y="13" width="1" height="1"/><rect x="6" y="13" width="1" height="1"/><rect x="10" y="13" width="1" height="1"/><rect x="14" y="13" width="1" height="1"/></g></svg>
<svg style="position:absolute;left:1190px;top:167px;" width="17" height="15" viewBox="0 0 17 15" shape-rendering="crispEdges"><rect x="0" y="0" width="3" height="12" fill="#008000"/><rect x="10" y="0" width="3" height="12" fill="#008000"/><path d="M1.5,1.5 L15,10.5 M1.5,10.5 L15,1.5" stroke="#f00" stroke-width="1.4"/><rect x="0" y="12" width="16" height="1" fill="#000"/><g fill="#000"><rect x="2" y="13" width="1" height="1"/><rect x="6" y="13" width="1" height="1"/><rect x="10" y="13" width="1" height="1"/><rect x="14" y="13" width="1" height="1"/></g></svg>
<svg style="position:absolute;left:1213px;top:167px;" width="17" height="15" viewBox="0 0 17 15" shape-rendering="crispEdges"><rect x="0" y="0" width="3" height="12" fill="#008000"/><rect x="10" y="0" width="3" height="12" fill="#008000"/><rect x="3" y="5" width="7" height="2" fill="#000"/><rect x="5" y="3" width="3" height="6" fill="#000"/><rect x="0" y="12" width="16" height="1" fill="#000"/><g fill="#000"><rect x="2" y="13" width="1" height="1"/><rect x="6" y="13" width="1" height="1"/><rect x="10" y="13" width="1" height="1"/><rect x="14" y="13" width="1" height="1"/></g></svg>
<svg style="position:absolute;left:1236px;top:167px;" width="17" height="15" viewBox="0 0 17 15" shape-rendering="crispEdges"><rect x="0" y="0" width="3" height="12" fill="#008000"/><rect x="10" y="0" width="3" height="12" fill="#008000"/><rect x="3" y="3" width="7" height="2" fill="#000"/><rect x="3" y="7" width="7" height="2" fill="#000"/><rect x="0" y="12" width="16" height="1" fill="#000"/><g fill="#000"><rect x="2" y="13" width="1" height="1"/><rect x="6" y="13" width="1" height="1"/><rect x="10" y="13" width="1" height="1"/><rect x="14" y="13" width="1" height="1"/></g></svg>
<div style="left:1259px;top:164px;width:1px;height:19px;background:#a0a0a0"></div>
<div style="left:1260px;top:164px;width:1px;height:19px;background:#fff"></div>
<div style="left:1262px;top:164px;width:1px;height:19px;background:#a0a0a0"></div>
<div style="left:1263px;top:164px;width:1px;height:19px;background:#fff"></div>
<svg style="position:absolute;left:1267px;top:166px;" width="17" height="17" viewBox="0 0 17 17" shape-rendering="crispEdges"><polygon points="6,1 11,1 12,2 12,4 14,4 16,6 14,8 14,16 12,16 12,12 10,12 10,16 6,16 6,12 0,12 0,0 6,0" fill="#9c9c9c"/><rect x="1" y="1" width="6" height="10" fill="#fff"/><g fill="#9c9c9c"><rect x="2" y="2" width="2" height="1"/><rect x="2" y="4" width="3" height="1"/><rect x="2" y="6" width="4" height="1"/><rect x="2" y="8" width="3" height="1"/></g><rect x="8" y="3" width="1" height="1" fill="#fff"/><rect x="9" y="5" width="1" height="1" fill="#fff"/><rect x="14" y="6" width="1" height="1" fill="#fff"/></svg>
<svg style="position:absolute;left:1290px;top:166px;" width="17" height="17" viewBox="0 0 17 17" shape-rendering="crispEdges"><polygon points="6,1 11,1 12,2 12,4 14,4 16,6 14,8 14,16 12,16 12,12 10,12 10,16 6,16 6,12 0,12 0,0 6,0" fill="#9c9c9c"/><rect x="1" y="1" width="1" height="1" fill="#fff"/><rect x="1" y="6" width="1" height="3" fill="#fff"/><rect x="8" y="3" width="1" height="1" fill="#fff"/><rect x="7" y="6" width="1" height="3" fill="#fff"/><rect x="14" y="6" width="1" height="1" fill="#fff"/></svg>
<svg style="position:absolute;left:1313px;top:166px;" width="17" height="17" viewBox="0 0 17 17" shape-rendering="crispEdges"><rect x="0" y="0" width="10" height="13" fill="#9c9c9c"/><rect x="3" y="3" width="5" height="6" fill="#fff"/><polygon points="10,1 12,3 14,3 15,5 13,7 15,10 15,12 13,12 11,9 11,13 10,13" fill="#9c9c9c"/><g fill="#9c9c9c"><rect x="6" y="14" width="1" height="1"/><rect x="8" y="14" width="2" height="1"/><rect x="11" y="14" width="1" height="1"/><rect x="13" y="14" width="1" height="1"/></g></svg>
<svg style="position:absolute;left:1335px;top:166px;" width="5" height="16" viewBox="0 0 5 16" shape-rendering="crispEdges"><circle cx="8" cy="8" r="6.6" fill="none" stroke="#f00" stroke-width="2.2"/></svg>
<div style="left:0px;top:190px;width:1339px;height:1px;background:#fff"></div>
<div style="left:0px;top:191px;width:1339px;height:1px;background:#a0a0a0"></div>
<div style="left:-1px;top:192px;width:1212px;height:35px;border:1px solid #d5dfe5;border-right:none;border-radius:3px 0 0 3px;box-shadow:0 1px 0 #fff, inset 0 1px 0 #fff"></div>
<div style="left:0px;top:231px;width:1182px;height:1px;background:#fff"></div>
<div class="t" style="left:4.5px;top:207.89px;font-size:12px;line-height:12px;font-weight:700;color:#000;">Zoom H: 16</div>
<div style="left:78px;top:206px;width:994px;height:15px;background:#e7eaea;border:1px solid #fff;border-top-color:#a8a8a8;border-left-color:#a8a8a8"></div>
<div style="left:99px;top:204px;width:9px;height:19px;border:1px solid #707070;border-radius:2px;background:linear-gradient(#f8f8f8 0%,#ececec 45%,#dcdcdc 50%,#d4d4d4 100%);box-shadow:inset 0 0 0 1px #fff"></div>
<div class="t" style="left:1080.6px;top:207.59px;font-size:12px;line-height:12px;font-weight:700;color:#000;">256</div>
<div class="fld" style="left:1112px;top:204px;width:35px;height:21px"></div>
<div class="t" style="left:1115.6px;top:207.59px;font-size:12px;line-height:12px;font-weight:700;color:#000;">21</div>
<div class="t" style="left:1149px;top:209.71px;font-size:11px;line-height:11px;font-weight:700;color:#000;">x</div>
<div class="fld" style="left:1159px;top:204px;width:31px;height:21px"></div>
<div class="t" style="left:1162px;top:207.59px;font-size:12px;line-height:12px;font-weight:700;color:#000;">1</div>
<div style="left:1191px;top:205px;width:14px;height:9px;border:1px solid #a4a6aa;border-radius:1px;background:linear-gradient(#f4f4f4,#e8e8e8);box-shadow:inset 0 0 0 1px #fafafa"></div>
<div style="left:1191px;top:215px;width:14px;height:10px;border:1px solid #a4a6aa;border-radius:1px;background:linear-gradient(#f4f4f4,#e8e8e8);box-shadow:inset 0 0 0 1px #fafafa"></div>
<svg style="position:absolute;left:1194px;top:207px;" width="7" height="4" viewBox="0 0 7 4" shape-rendering="crispEdges"><rect x="3" y="0" width="1" height="1" fill="#5070c0"/><rect x="2" y="1" width="3" height="1" fill="#5070c0"/><rect x="1" y="2" width="5" height="1" fill="#5070c0"/></svg>
<svg style="position:absolute;left:1194px;top:219px;" width="7" height="4" viewBox="0 0 7 4" shape-rendering="crispEdges"><rect x="1" y="0" width="5" height="1" fill="#5070c0"/><rect x="2" y="1" width="3" height="1" fill="#5070c0"/><rect x="3" y="2" width="1" height="1" fill="#5070c0"/></svg>
<div style="left:0px;top:232px;width:1181px;height:420px;background:#000"></div>
<svg style="position:absolute;left:0;top:232px" width="1181" height="420" viewBox="0 232 1181 420"><path d="M74,626.5h3 M80,626.5h3 M86,626.5h3 M92,626.5h3 M98,626.5h3 M104,626.5h3 M110,626.5h3 M116,626.5h3 M122,626.5h3 M128,626.5h3 M134,626.5h3 M140,626.5h3 M146,626.5h3 M152,626.5h3 M158,626.5h3 M164,626.5h3 M170,626.5h3 M176,626.5h3 M182,626.5h3 M188,626.5h3 M194,626.5h3 M200,626.5h3 M206,626.5h3 M212,626.5h3 M218,626.5h3 M224,626.5h3 M230,626.5h3 M236,626.5h3 M242,626.5h3 M248,626.5h3 M254,626.5h3 M260,626.5h3 M266,626.5h3 M272,626.5h3 M278,626.5h3 M284,626.5h3 M290,626.5h3 M296,626.5h3 M302,626.5h3 M308,626.5h3 M314,626.5h3 M320,626.5h3 M326,626.5h3 M332,626.5h3 M338,626.5h3 M344,626.5h3 M350,626.5h3 M356,626.5h3 M362,626.5h3 M368,626.5h3 M374,626.5h3 M380,626.5h3 M386,626.5h3 M392,626.5h3 M398,626.5h3 M404,626.5h3 M410,626.5h3 M416,626.5h3 M422,626.5h3 M428,626.5h3 M434,626.5h3 M440,626.5h3 M446,626.5h3 M452,626.5h3 M458,626.5h3 M464,626.5h3 M470,626.5h3 M476,626.5h3 M482,626.5h3 M488,626.5h3 M494,626.5h3 M500,626.5h3 M506,626.5h3 M512,626.5h3 M518,626.5h3 M524,626.5h3 M530,626.5h3 M536,626.5h3 M542,626.5h3 M548,626.5h3 M554,626.5h3 M560,626.5h3 M566,626.5h3 M572,626.5h3 M578,626.5h3 M584,626.5h3 M590,626.5h3 M596,626.5h3 M602,626.5h3 M608,626.5h3 M614,626.5h3 M620,626.5h3 M626,626.5h3 M632,626.5h3 M638,626.5h3 M644,626.5h3 M650,626.5h3 M656,626.5h3 M662,626.5h3 M668,626.5h3 M674,626.5h3 M680,626.5h3 M686,626.5h3 M692,626.5h3 M698,626.5h3 M704,626.5h3 M710,626.5h3 M716,626.5h3 M722,626.5h3 M728,626.5h3 M734,626.5h3 M740,626.5h3 M746,626.5h3 M752,626.5h3 M758,626.5h3 M764,626.5h3 M770,626.5h3 M776,626.5h3 M782,626.5h3 M788,626.5h3 M794,626.5h3 M800,626.5h3 M806,626.5h3 M812,626.5h3 M818,626.5h3 M824,626.5h3 M830,626.5h3 M836,626.5h3 M842,626.5h3 M848,626.5h3 M854,626.5h3 M860,626.5h3 M866,626.5h3 M872,626.5h3 M878,626.5h3 M884,626.5h3 M890,626.5h3 M896,626.5h3 M902,626.5h3 M908,626.5h3 M914,626.5h3 M920,626.5h3 M926,626.5h3 M932,626.5h3 M938,626.5h3 M944,626.5h3 M950,626.5h3 M956,626.5h3 M962,626.5h3 M968,626.5h3 M974,626.5h3 M980,626.5h3 M986,626.5h3 M992,626.5h3 M998,626.5h3 M1004,626.5h3 M1010,626.5h3 M1016,626.5h3 M1022,626.5h3 M1028,626.5h3 M1034,626.5h3 M1040,626.5h3 M1046,626.5h3 M1052,626.5h3 M1058,626.5h3 M1064,626.5h3 M1070,626.5h3 M1076,626.5h3 M1082,626.5h3 M1088,626.5h3 M1094,626.5h3" stroke="#a0a0a0" stroke-width="1" fill="none"/><path d="M74,599.5h3 M80,599.5h3 M86,599.5h3 M92,599.5h3 M98,599.5h3 M104,599.5h3 M110,599.5h3 M116,599.5h3 M122,599.5h3 M128,599.5h3 M134,599.5h3 M140,599.5h3 M146,599.5h3 M152,599.5h3 M158,599.5h3 M164,599.5h3 M170,599.5h3 M176,599.5h3 M182,599.5h3 M188,599.5h3 M194,599.5h3 M200,599.5h3 M206,599.5h3 M212,599.5h3 M218,599.5h3 M224,599.5h3 M230,599.5h3 M236,599.5h3 M242,599.5h3 M248,599.5h3 M254,599.5h3 M260,599.5h3 M266,599.5h3 M272,599.5h3 M278,599.5h3 M284,599.5h3 M290,599.5h3 M296,599.5h3 M302,599.5h3 M308,599.5h3 M314,599.5h3 M320,599.5h3 M326,599.5h3 M332,599.5h3 M338,599.5h3 M344,599.5h3 M350,599.5h3 M356,599.5h3 M362,599.5h3 M368,599.5h3 M374,599.5h3 M380,599.5h3 M386,599.5h3 M392,599.5h3 M398,599.5h3 M404,599.5h3 M410,599.5h3 M416,599.5h3 M422,599.5h3 M428,599.5h3 M434,599.5h3 M440,599.5h3 M446,599.5h3 M452,599.5h3 M458,599.5h3 M464,599.5h3 M470,599.5h3 M476,599.5h3 M482,599.5h3 M488,599.5h3 M494,599.5h3 M500,599.5h3 M506,599.5h3 M512,599.5h3 M518,599.5h3 M524,599.5h3 M530,599.5h3 M536,599.5h3 M542,599.5h3 M548,599.5h3 M554,599.5h3 M560,599.5h3 M566,599.5h3 M572,599.5h3 M578,599.5h3 M584,599.5h3 M590,599.5h3 M596,599.5h3 M602,599.5h3 M608,599.5h3 M614,599.5h3 M620,599.5h3 M626,599.5h3 M632,599.5h3 M638,599.5h3 M644,599.5h3 M650,599.5h3 M656,599.5h3 M662,599.5h3 M668,599.5h3 M674,599.5h3 M680,599.5h3 M686,599.5h3 M692,599.5h3 M698,599.5h3 M704,599.5h3 M710,599.5h3 M716,599.5h3 M722,599.5h3 M728,599.5h3 M734,599.5h3 M740,599.5h3 M746,599.5h3 M752,599.5h3 M758,599.5h3 M764,599.5h3 M770,599.5h3 M776,599.5h3 M782,599.5h3 M788,599.5h3 M794,599.5h3 M800,599.5h3 M806,599.5h3 M812,599.5h3 M818,599.5h3 M824,599.5h3 M830,599.5h3 M836,599.5h3 M842,599.5h3 M848,599.5h3 M854,599.5h3 M860,599.5h3 M866,599.5h3 M872,599.5h3 M878,599.5h3 M884,599.5h3 M890,599.5h3 M896,599.5h3 M902,599.5h3 M908,599.5h3 M914,599.5h3 M920,599.5h3 M926,599.5h3 M932,599.5h3 M938,599.5h3 M944,599.5h3 M950,599.5h3 M956,599.5h3 M962,599.5h3 M968,599.5h3 M974,599.5h3 M980,599.5h3 M986,599.5h3 M992,599.5h3 M998,599.5h3 M1004,599.5h3 M1010,599.5h3 M1016,599.5h3 M1022,599.5h3 M1028,599.5h3 M1034,599.5h3 M1040,599.5h3 M1046,599.5h3 M1052,599.5h3 M1058,599.5h3 M1064,599.5h3 M1070,599.5h3 M1076,599.5h3 M1082,599.5h3 M1088,599.5h3 M1094,599.5h3" stroke="#a0a0a0" stroke-width="1" fill="none"/><path d="M74,573.5h3 M80,573.5h3 M86,573.5h3 M92,573.5h3 M98,573.5h3 M104,573.5h3 M110,573.5h3 M116,573.5h3 M122,573.5h3 M128,573.5h3 M134,573.5h3 M140,573.5h3 M146,573.5h3 M152,573.5h3 M158,573.5h3 M164,573.5h3 M170,573.5h3 M176,573.5h3 M182,573.5h3 M188,573.5h3 M194,573.5h3 M200,573.5h3 M206,573.5h3 M212,573.5h3 M218,573.5h3 M224,573.5h3 M230,573.5h3 M236,573.5h3 M242,573.5h3 M248,573.5h3 M254,573.5h3 M260,573.5h3 M266,573.5h3 M272,573.5h3 M278,573.5h3 M284,573.5h3 M290,573.5h3 M296,573.5h3 M302,573.5h3 M308,573.5h3 M314,573.5h3 M320,573.5h3 M326,573.5h3 M332,573.5h3 M338,573.5h3 M344,573.5h3 M350,573.5h3 M356,573.5h3 M362,573.5h3 M368,573.5h3 M374,573.5h3 M380,573.5h3 M386,573.5h3 M392,573.5h3 M398,573.5h3 M404,573.5h3 M410,573.5h3 M416,573.5h3 M422,573.5h3 M428,573.5h3 M434,573.5h3 M440,573.5h3 M446,573.5h3 M452,573.5h3 M458,573.5h3 M464,573.5h3 M470,573.5h3 M476,573.5h3 M482,573.5h3 M488,573.5h3 M494,573.5h3 M500,573.5h3 M506,573.5h3 M512,573.5h3 M518,573.5h3 M524,573.5h3 M530,573.5h3 M536,573.5h3 M542,573.5h3 M548,573.5h3 M554,573.5h3 M560,573.5h3 M566,573.5h3 M572,573.5h3 M578,573.5h3 M584,573.5h3 M590,573.5h3 M596,573.5h3 M602,573.5h3 M608,573.5h3 M614,573.5h3 M620,573.5h3 M626,573.5h3 M632,573.5h3 M638,573.5h3 M644,573.5h3 M650,573.5h3 M656,573.5h3 M662,573.5h3 M668,573.5h3 M674,573.5h3 M680,573.5h3 M686,573.5h3 M692,573.5h3 M698,573.5h3 M704,573.5h3 M710,573.5h3 M716,573.5h3 M722,573.5h3 M728,573.5h3 M734,573.5h3 M740,573.5h3 M746,573.5h3 M752,573.5h3 M758,573.5h3 M764,573.5h3 M770,573.5h3 M776,573.5h3 M782,573.5h3 M788,573.5h3 M794,573.5h3 M800,573.5h3 M806,573.5h3 M812,573.5h3 M818,573.5h3 M824,573.5h3 M830,573.5h3 M836,573.5h3 M842,573.5h3 M848,573.5h3 M854,573.5h3 M860,573.5h3 M866,573.5h3 M872,573.5h3 M878,573.5h3 M884,573.5h3 M890,573.5h3 M896,573.5h3 M902,573.5h3 M908,573.5h3 M914,573.5h3 M920,573.5h3 M926,573.5h3 M932,573.5h3 M938,573.5h3 M944,573.5h3 M950,573.5h3 M956,573.5h3 M962,573.5h3 M968,573.5h3 M974,573.5h3 M980,573.5h3 M986,573.5h3 M992,573.5h3 M998,573.5h3 M1004,573.5h3 M1010,573.5h3 M1016,573.5h3 M1022,573.5h3 M1028,573.5h3 M1034,573.5h3 M1040,573.5h3 M1046,573.5h3 M1052,573.5h3 M1058,573.5h3 M1064,573.5h3 M1070,573.5h3 M1076,573.5h3 M1082,573.5h3 M1088,573.5h3 M1094,573.5h3" stroke="#a0a0a0" stroke-width="1" fill="none"/><path d="M74,546.5h3 M80,546.5h3 M86,546.5h3 M92,546.5h3 M98,546.5h3 M104,546.5h3 M110,546.5h3 M116,546.5h3 M122,546.5h3 M128,546.5h3 M134,546.5h3 M140,546.5h3 M146,546.5h3 M152,546.5h3 M158,546.5h3 M164,546.5h3 M170,546.5h3 M176,546.5h3 M182,546.5h3 M188,546.5h3 M194,546.5h3 M200,546.5h3 M206,546.5h3 M212,546.5h3 M218,546.5h3 M224,546.5h3 M230,546.5h3 M236,546.5h3 M242,546.5h3 M248,546.5h3 M254,546.5h3 M260,546.5h3 M266,546.5h3 M272,546.5h3 M278,546.5h3 M284,546.5h3 M290,546.5h3 M296,546.5h3 M302,546.5h3 M308,546.5h3 M314,546.5h3 M320,546.5h3 M326,546.5h3 M332,546.5h3 M338,546.5h3 M344,546.5h3 M350,546.5h3 M356,546.5h3 M362,546.5h3 M368,546.5h3 M374,546.5h3 M380,546.5h3 M386,546.5h3 M392,546.5h3 M398,546.5h3 M404,546.5h3 M410,546.5h3 M416,546.5h3 M422,546.5h3 M428,546.5h3 M434,546.5h3 M440,546.5h3 M446,546.5h3 M452,546.5h3 M458,546.5h3 M464,546.5h3 M470,546.5h3 M476,546.5h3 M482,546.5h3 M488,546.5h3 M494,546.5h3 M500,546.5h3 M506,546.5h3 M512,546.5h3 M518,546.5h3 M524,546.5h3 M530,546.5h3 M536,546.5h3 M542,546.5h3 M548,546.5h3 M554,546.5h3 M560,546.5h3 M566,546.5h3 M572,546.5h3 M578,546.5h3 M584,546.5h3 M590,546.5h3 M596,546.5h3 M602,546.5h3 M608,546.5h3 M614,546.5h3 M620,546.5h3 M626,546.5h3 M632,546.5h3 M638,546.5h3 M644,546.5h3 M650,546.5h3 M656,546.5h3 M662,546.5h3 M668,546.5h3 M674,546.5h3 M680,546.5h3 M686,546.5h3 M692,546.5h3 M698,546.5h3 M704,546.5h3 M710,546.5h3 M716,546.5h3 M722,546.5h3 M728,546.5h3 M734,546.5h3 M740,546.5h3 M746,546.5h3 M752,546.5h3 M758,546.5h3 M764,546.5h3 M770,546.5h3 M776,546.5h3 M782,546.5h3 M788,546.5h3 M794,546.5h3 M800,546.5h3 M806,546.5h3 M812,546.5h3 M818,546.5h3 M824,546.5h3 M830,546.5h3 M836,546.5h3 M842,546.5h3 M848,546.5h3 M854,546.5h3 M860,546.5h3 M866,546.5h3 M872,546.5h3 M878,546.5h3 M884,546.5h3 M890,546.5h3 M896,546.5h3 M902,546.5h3 M908,546.5h3 M914,546.5h3 M920,546.5h3 M926,546.5h3 M932,546.5h3 M938,546.5h3 M944,546.5h3 M950,546.5h3 M956,546.5h3 M962,546.5h3 M968,546.5h3 M974,546.5h3 M980,546.5h3 M986,546.5h3 M992,546.5h3 M998,546.5h3 M1004,546.5h3 M1010,546.5h3 M1016,546.5h3 M1022,546.5h3 M1028,546.5h3 M1034,546.5h3 M1040,546.5h3 M1046,546.5h3 M1052,546.5h3 M1058,546.5h3 M1064,546.5h3 M1070,546.5h3 M1076,546.5h3 M1082,546.5h3 M1088,546.5h3 M1094,546.5h3" stroke="#a0a0a0" stroke-width="1" fill="none"/><path d="M74,519.5h3 M80,519.5h3 M86,519.5h3 M92,519.5h3 M98,519.5h3 M104,519.5h3 M110,519.5h3 M116,519.5h3 M122,519.5h3 M128,519.5h3 M134,519.5h3 M140,519.5h3 M146,519.5h3 M152,519.5h3 M158,519.5h3 M164,519.5h3 M170,519.5h3 M176,519.5h3 M182,519.5h3 M188,519.5h3 M194,519.5h3 M200,519.5h3 M206,519.5h3 M212,519.5h3 M218,519.5h3 M224,519.5h3 M230,519.5h3 M236,519.5h3 M242,519.5h3 M248,519.5h3 M254,519.5h3 M260,519.5h3 M266,519.5h3 M272,519.5h3 M278,519.5h3 M284,519.5h3 M290,519.5h3 M296,519.5h3 M302,519.5h3 M308,519.5h3 M314,519.5h3 M320,519.5h3 M326,519.5h3 M332,519.5h3 M338,519.5h3 M344,519.5h3 M350,519.5h3 M356,519.5h3 M362,519.5h3 M368,519.5h3 M374,519.5h3 M380,519.5h3 M386,519.5h3 M392,519.5h3 M398,519.5h3 M404,519.5h3 M410,519.5h3 M416,519.5h3 M422,519.5h3 M428,519.5h3 M434,519.5h3 M440,519.5h3 M446,519.5h3 M452,519.5h3 M458,519.5h3 M464,519.5h3 M470,519.5h3 M476,519.5h3 M482,519.5h3 M488,519.5h3 M494,519.5h3 M500,519.5h3 M506,519.5h3 M512,519.5h3 M518,519.5h3 M524,519.5h3 M530,519.5h3 M536,519.5h3 M542,519.5h3 M548,519.5h3 M554,519.5h3 M560,519.5h3 M566,519.5h3 M572,519.5h3 M578,519.5h3 M584,519.5h3 M590,519.5h3 M596,519.5h3 M602,519.5h3 M608,519.5h3 M614,519.5h3 M620,519.5h3 M626,519.5h3 M632,519.5h3 M638,519.5h3 M644,519.5h3 M650,519.5h3 M656,519.5h3 M662,519.5h3 M668,519.5h3 M674,519.5h3 M680,519.5h3 M686,519.5h3 M692,519.5h3 M698,519.5h3 M704,519.5h3 M710,519.5h3 M716,519.5h3 M722,519.5h3 M728,519.5h3 M734,519.5h3 M740,519.5h3 M746,519.5h3 M752,519.5h3 M758,519.5h3 M764,519.5h3 M770,519.5h3 M776,519.5h3 M782,519.5h3 M788,519.5h3 M794,519.5h3 M800,519.5h3 M806,519.5h3 M812,519.5h3 M818,519.5h3 M824,519.5h3 M830,519.5h3 M836,519.5h3 M842,519.5h3 M848,519.5h3 M854,519.5h3 M860,519.5h3 M866,519.5h3 M872,519.5h3 M878,519.5h3 M884,519.5h3 M890,519.5h3 M896,519.5h3 M902,519.5h3 M908,519.5h3 M914,519.5h3 M920,519.5h3 M926,519.5h3 M932,519.5h3 M938,519.5h3 M944,519.5h3 M950,519.5h3 M956,519.5h3 M962,519.5h3 M968,519.5h3 M974,519.5h3 M980,519.5h3 M986,519.5h3 M992,519.5h3 M998,519.5h3 M1004,519.5h3 M1010,519.5h3 M1016,519.5h3 M1022,519.5h3 M1028,519.5h3 M1034,519.5h3 M1040,519.5h3 M1046,519.5h3 M1052,519.5h3 M1058,519.5h3 M1064,519.5h3 M1070,519.5h3 M1076,519.5h3 M1082,519.5h3 M1088,519.5h3 M1094,519.5h3" stroke="#a0a0a0" stroke-width="1" fill="none"/><path d="M74,493.5h3 M80,493.5h3 M86,493.5h3 M92,493.5h3 M98,493.5h3 M104,493.5h3 M110,493.5h3 M116,493.5h3 M122,493.5h3 M128,493.5h3 M134,493.5h3 M140,493.5h3 M146,493.5h3 M152,493.5h3 M158,493.5h3 M164,493.5h3 M170,493.5h3 M176,493.5h3 M182,493.5h3 M188,493.5h3 M194,493.5h3 M200,493.5h3 M206,493.5h3 M212,493.5h3 M218,493.5h3 M224,493.5h3 M230,493.5h3 M236,493.5h3 M242,493.5h3 M248,493.5h3 M254,493.5h3 M260,493.5h3 M266,493.5h3 M272,493.5h3 M278,493.5h3 M284,493.5h3 M290,493.5h3 M296,493.5h3 M302,493.5h3 M308,493.5h3 M314,493.5h3 M320,493.5h3 M326,493.5h3 M332,493.5h3 M338,493.5h3 M344,493.5h3 M350,493.5h3 M356,493.5h3 M362,493.5h3 M368,493.5h3 M374,493.5h3 M380,493.5h3 M386,493.5h3 M392,493.5h3 M398,493.5h3 M404,493.5h3 M410,493.5h3 M416,493.5h3 M422,493.5h3 M428,493.5h3 M434,493.5h3 M440,493.5h3 M446,493.5h3 M452,493.5h3 M458,493.5h3 M464,493.5h3 M470,493.5h3 M476,493.5h3 M482,493.5h3 M488,493.5h3 M494,493.5h3 M500,493.5h3 M506,493.5h3 M512,493.5h3 M518,493.5h3 M524,493.5h3 M530,493.5h3 M536,493.5h3 M542,493.5h3 M548,493.5h3 M554,493.5h3 M560,493.5h3 M566,493.5h3 M572,493.5h3 M578,493.5h3 M584,493.5h3 M590,493.5h3 M596,493.5h3 M602,493.5h3 M608,493.5h3 M614,493.5h3 M620,493.5h3 M626,493.5h3 M632,493.5h3 M638,493.5h3 M644,493.5h3 M650,493.5h3 M656,493.5h3 M662,493.5h3 M668,493.5h3 M674,493.5h3 M680,493.5h3 M686,493.5h3 M692,493.5h3 M698,493.5h3 M704,493.5h3 M710,493.5h3 M716,493.5h3 M722,493.5h3 M728,493.5h3 M734,493.5h3 M740,493.5h3 M746,493.5h3 M752,493.5h3 M758,493.5h3 M764,493.5h3 M770,493.5h3 M776,493.5h3 M782,493.5h3 M788,493.5h3 M794,493.5h3 M800,493.5h3 M806,493.5h3 M812,493.5h3 M818,493.5h3 M824,493.5h3 M830,493.5h3 M836,493.5h3 M842,493.5h3 M848,493.5h3 M854,493.5h3 M860,493.5h3 M866,493.5h3 M872,493.5h3 M878,493.5h3 M884,493.5h3 M890,493.5h3 M896,493.5h3 M902,493.5h3 M908,493.5h3 M914,493.5h3 M920,493.5h3 M926,493.5h3 M932,493.5h3 M938,493.5h3 M944,493.5h3 M950,493.5h3 M956,493.5h3 M962,493.5h3 M968,493.5h3 M974,493.5h3 M980,493.5h3 M986,493.5h3 M992,493.5h3 M998,493.5h3 M1004,493.5h3 M1010,493.5h3 M1016,493.5h3 M1022,493.5h3 M1028,493.5h3 M1034,493.5h3 M1040,493.5h3 M1046,493.5h3 M1052,493.5h3 M1058,493.5h3 M1064,493.5h3 M1070,493.5h3 M1076,493.5h3 M1082,493.5h3 M1088,493.5h3 M1094,493.5h3" stroke="#a0a0a0" stroke-width="1" fill="none"/><path d="M74,466.5h3 M80,466.5h3 M86,466.5h3 M92,466.5h3 M98,466.5h3 M104,466.5h3 M110,466.5h3 M116,466.5h3 M122,466.5h3 M128,466.5h3 M134,466.5h3 M140,466.5h3 M146,466.5h3 M152,466.5h3 M158,466.5h3 M164,466.5h3 M170,466.5h3 M176,466.5h3 M182,466.5h3 M188,466.5h3 M194,466.5h3 M200,466.5h3 M206,466.5h3 M212,466.5h3 M218,466.5h3 M224,466.5h3 M230,466.5h3 M236,466.5h3 M242,466.5h3 M248,466.5h3 M254,466.5h3 M260,466.5h3 M266,466.5h3 M272,466.5h3 M278,466.5h3 M284,466.5h3 M290,466.5h3 M296,466.5h3 M302,466.5h3 M308,466.5h3 M314,466.5h3 M320,466.5h3 M326,466.5h3 M332,466.5h3 M338,466.5h3 M344,466.5h3 M350,466.5h3 M356,466.5h3 M362,466.5h3 M368,466.5h3 M374,466.5h3 M380,466.5h3 M386,466.5h3 M392,466.5h3 M398,466.5h3 M404,466.5h3 M410,466.5h3 M416,466.5h3 M422,466.5h3 M428,466.5h3 M434,466.5h3 M440,466.5h3 M446,466.5h3 M452,466.5h3 M458,466.5h3 M464,466.5h3 M470,466.5h3 M476,466.5h3 M482,466.5h3 M488,466.5h3 M494,466.5h3 M500,466.5h3 M506,466.5h3 M512,466.5h3 M518,466.5h3 M524,466.5h3 M530,466.5h3 M536,466.5h3 M542,466.5h3 M548,466.5h3 M554,466.5h3 M560,466.5h3 M566,466.5h3 M572,466.5h3 M578,466.5h3 M584,466.5h3 M590,466.5h3 M596,466.5h3 M602,466.5h3 M608,466.5h3 M614,466.5h3 M620,466.5h3 M626,466.5h3 M632,466.5h3 M638,466.5h3 M644,466.5h3 M650,466.5h3 M656,466.5h3 M662,466.5h3 M668,466.5h3 M674,466.5h3 M680,466.5h3 M686,466.5h3 M692,466.5h3 M698,466.5h3 M704,466.5h3 M710,466.5h3 M716,466.5h3 M722,466.5h3 M728,466.5h3 M734,466.5h3 M740,466.5h3 M746,466.5h3 M752,466.5h3 M758,466.5h3 M764,466.5h3 M770,466.5h3 M776,466.5h3 M782,466.5h3 M788,466.5h3 M794,466.5h3 M800,466.5h3 M806,466.5h3 M812,466.5h3 M818,466.5h3 M824,466.5h3 M830,466.5h3 M836,466.5h3 M842,466.5h3 M848,466.5h3 M854,466.5h3 M860,466.5h3 M866,466.5h3 M872,466.5h3 M878,466.5h3 M884,466.5h3 M890,466.5h3 M896,466.5h3 M902,466.5h3 M908,466.5h3 M914,466.5h3 M920,466.5h3 M926,466.5h3 M932,466.5h3 M938,466.5h3 M944,466.5h3 M950,466.5h3 M956,466.5h3 M962,466.5h3 M968,466.5h3 M974,466.5h3 M980,466.5h3 M986,466.5h3 M992,466.5h3 M998,466.5h3 M1004,466.5h3 M1010,466.5h3 M1016,466.5h3 M1022,466.5h3 M1028,466.5h3 M1034,466.5h3 M1040,466.5h3 M1046,466.5h3 M1052,466.5h3 M1058,466.5h3 M1064,466.5h3 M1070,466.5h3 M1076,466.5h3 M1082,466.5h3 M1088,466.5h3 M1094,466.5h3" stroke="#a0a0a0" stroke-width="1" fill="none"/><path d="M74,440.5h3 M80,440.5h3 M86,440.5h3 M92,440.5h3 M98,440.5h3 M104,440.5h3 M110,440.5h3 M116,440.5h3 M122,440.5h3 M128,440.5h3 M134,440.5h3 M140,440.5h3 M146,440.5h3 M152,440.5h3 M158,440.5h3 M164,440.5h3 M170,440.5h3 M176,440.5h3 M182,440.5h3 M188,440.5h3 M194,440.5h3 M200,440.5h3 M206,440.5h3 M212,440.5h3 M218,440.5h3 M224,440.5h3 M230,440.5h3 M236,440.5h3 M242,440.5h3 M248,440.5h3 M254,440.5h3 M260,440.5h3 M266,440.5h3 M272,440.5h3 M278,440.5h3 M284,440.5h3 M290,440.5h3 M296,440.5h3 M302,440.5h3 M308,440.5h3 M314,440.5h3 M320,440.5h3 M326,440.5h3 M332,440.5h3 M338,440.5h3 M344,440.5h3 M350,440.5h3 M356,440.5h3 M362,440.5h3 M368,440.5h3 M374,440.5h3 M380,440.5h3 M386,440.5h3 M392,440.5h3 M398,440.5h3 M404,440.5h3 M410,440.5h3 M416,440.5h3 M422,440.5h3 M428,440.5h3 M434,440.5h3 M440,440.5h3 M446,440.5h3 M452,440.5h3 M458,440.5h3 M464,440.5h3 M470,440.5h3 M476,440.5h3 M482,440.5h3 M488,440.5h3 M494,440.5h3 M500,440.5h3 M506,440.5h3 M512,440.5h3 M518,440.5h3 M524,440.5h3 M530,440.5h3 M536,440.5h3 M542,440.5h3 M548,440.5h3 M554,440.5h3 M560,440.5h3 M566,440.5h3 M572,440.5h3 M578,440.5h3 M584,440.5h3 M590,440.5h3 M596,440.5h3 M602,440.5h3 M608,440.5h3 M614,440.5h3 M620,440.5h3 M626,440.5h3 M632,440.5h3 M638,440.5h3 M644,440.5h3 M650,440.5h3 M656,440.5h3 M662,440.5h3 M668,440.5h3 M674,440.5h3 M680,440.5h3 M686,440.5h3 M692,440.5h3 M698,440.5h3 M704,440.5h3 M710,440.5h3 M716,440.5h3 M722,440.5h3 M728,440.5h3 M734,440.5h3 M740,440.5h3 M746,440.5h3 M752,440.5h3 M758,440.5h3 M764,440.5h3 M770,440.5h3 M776,440.5h3 M782,440.5h3 M788,440.5h3 M794,440.5h3 M800,440.5h3 M806,440.5h3 M812,440.5h3 M818,440.5h3 M824,440.5h3 M830,440.5h3 M836,440.5h3 M842,440.5h3 M848,440.5h3 M854,440.5h3 M860,440.5h3 M866,440.5h3 M872,440.5h3 M878,440.5h3 M884,440.5h3 M890,440.5h3 M896,440.5h3 M902,440.5h3 M908,440.5h3 M914,440.5h3 M920,440.5h3 M926,440.5h3 M932,440.5h3 M938,440.5h3 M944,440.5h3 M950,440.5h3 M956,440.5h3 M962,440.5h3 M968,440.5h3 M974,440.5h3 M980,440.5h3 M986,440.5h3 M992,440.5h3 M998,440.5h3 M1004,440.5h3 M1010,440.5h3 M1016,440.5h3 M1022,440.5h3 M1028,440.5h3 M1034,440.5h3 M1040,440.5h3 M1046,440.5h3 M1052,440.5h3 M1058,440.5h3 M1064,440.5h3 M1070,440.5h3 M1076,440.5h3 M1082,440.5h3 M1088,440.5h3 M1094,440.5h3" stroke="#a0a0a0" stroke-width="1" fill="none"/><path d="M74,413.5h3 M80,413.5h3 M86,413.5h3 M92,413.5h3 M98,413.5h3 M104,413.5h3 M110,413.5h3 M116,413.5h3 M122,413.5h3 M128,413.5h3 M134,413.5h3 M140,413.5h3 M146,413.5h3 M152,413.5h3 M158,413.5h3 M164,413.5h3 M170,413.5h3 M176,413.5h3 M182,413.5h3 M188,413.5h3 M194,413.5h3 M200,413.5h3 M206,413.5h3 M212,413.5h3 M218,413.5h3 M224,413.5h3 M230,413.5h3 M236,413.5h3 M242,413.5h3 M248,413.5h3 M254,413.5h3 M260,413.5h3 M266,413.5h3 M272,413.5h3 M278,413.5h3 M284,413.5h3 M290,413.5h3 M296,413.5h3 M302,413.5h3 M308,413.5h3 M314,413.5h3 M320,413.5h3 M326,413.5h3 M332,413.5h3 M338,413.5h3 M344,413.5h3 M350,413.5h3 M356,413.5h3 M362,413.5h3 M368,413.5h3 M374,413.5h3 M380,413.5h3 M386,413.5h3 M392,413.5h3 M398,413.5h3 M404,413.5h3 M410,413.5h3 M416,413.5h3 M422,413.5h3 M428,413.5h3 M434,413.5h3 M440,413.5h3 M446,413.5h3 M452,413.5h3 M458,413.5h3 M464,413.5h3 M470,413.5h3 M476,413.5h3 M482,413.5h3 M488,413.5h3 M494,413.5h3 M500,413.5h3 M506,413.5h3 M512,413.5h3 M518,413.5h3 M524,413.5h3 M530,413.5h3 M536,413.5h3 M542,413.5h3 M548,413.5h3 M554,413.5h3 M560,413.5h3 M566,413.5h3 M572,413.5h3 M578,413.5h3 M584,413.5h3 M590,413.5h3 M596,413.5h3 M602,413.5h3 M608,413.5h3 M614,413.5h3 M620,413.5h3 M626,413.5h3 M632,413.5h3 M638,413.5h3 M644,413.5h3 M650,413.5h3 M656,413.5h3 M662,413.5h3 M668,413.5h3 M674,413.5h3 M680,413.5h3 M686,413.5h3 M692,413.5h3 M698,413.5h3 M704,413.5h3 M710,413.5h3 M716,413.5h3 M722,413.5h3 M728,413.5h3 M734,413.5h3 M740,413.5h3 M746,413.5h3 M752,413.5h3 M758,413.5h3 M764,413.5h3 M770,413.5h3 M776,413.5h3 M782,413.5h3 M788,413.5h3 M794,413.5h3 M800,413.5h3 M806,413.5h3 M812,413.5h3 M818,413.5h3 M824,413.5h3 M830,413.5h3 M836,413.5h3 M842,413.5h3 M848,413.5h3 M854,413.5h3 M860,413.5h3 M866,413.5h3 M872,413.5h3 M878,413.5h3 M884,413.5h3 M890,413.5h3 M896,413.5h3 M902,413.5h3 M908,413.5h3 M914,413.5h3 M920,413.5h3 M926,413.5h3 M932,413.5h3 M938,413.5h3 M944,413.5h3 M950,413.5h3 M956,413.5h3 M962,413.5h3 M968,413.5h3 M974,413.5h3 M980,413.5h3 M986,413.5h3 M992,413.5h3 M998,413.5h3 M1004,413.5h3 M1010,413.5h3 M1016,413.5h3 M1022,413.5h3 M1028,413.5h3 M1034,413.5h3 M1040,413.5h3 M1046,413.5h3 M1052,413.5h3 M1058,413.5h3 M1064,413.5h3 M1070,413.5h3 M1076,413.5h3 M1082,413.5h3 M1088,413.5h3 M1094,413.5h3" stroke="#a0a0a0" stroke-width="1" fill="none"/><path d="M74,386.5h3 M80,386.5h3 M86,386.5h3 M92,386.5h3 M98,386.5h3 M104,386.5h3 M110,386.5h3 M116,386.5h3 M122,386.5h3 M128,386.5h3 M134,386.5h3 M140,386.5h3 M146,386.5h3 M152,386.5h3 M158,386.5h3 M164,386.5h3 M170,386.5h3 M176,386.5h3 M182,386.5h3 M188,386.5h3 M194,386.5h3 M200,386.5h3 M206,386.5h3 M212,386.5h3 M218,386.5h3 M224,386.5h3 M230,386.5h3 M236,386.5h3 M242,386.5h3 M248,386.5h3 M254,386.5h3 M260,386.5h3 M266,386.5h3 M272,386.5h3 M278,386.5h3 M284,386.5h3 M290,386.5h3 M296,386.5h3 M302,386.5h3 M308,386.5h3 M314,386.5h3 M320,386.5h3 M326,386.5h3 M332,386.5h3 M338,386.5h3 M344,386.5h3 M350,386.5h3 M356,386.5h3 M362,386.5h3 M368,386.5h3 M374,386.5h3 M380,386.5h3 M386,386.5h3 M392,386.5h3 M398,386.5h3 M404,386.5h3 M410,386.5h3 M416,386.5h3 M422,386.5h3 M428,386.5h3 M434,386.5h3 M440,386.5h3 M446,386.5h3 M452,386.5h3 M458,386.5h3 M464,386.5h3 M470,386.5h3 M476,386.5h3 M482,386.5h3 M488,386.5h3 M494,386.5h3 M500,386.5h3 M506,386.5h3 M512,386.5h3 M518,386.5h3 M524,386.5h3 M530,386.5h3 M536,386.5h3 M542,386.5h3 M548,386.5h3 M554,386.5h3 M560,386.5h3 M566,386.5h3 M572,386.5h3 M578,386.5h3 M584,386.5h3 M590,386.5h3 M596,386.5h3 M602,386.5h3 M608,386.5h3 M614,386.5h3 M620,386.5h3 M626,386.5h3 M632,386.5h3 M638,386.5h3 M644,386.5h3 M650,386.5h3 M656,386.5h3 M662,386.5h3 M668,386.5h3 M674,386.5h3 M680,386.5h3 M686,386.5h3 M692,386.5h3 M698,386.5h3 M704,386.5h3 M710,386.5h3 M716,386.5h3 M722,386.5h3 M728,386.5h3 M734,386.5h3 M740,386.5h3 M746,386.5h3 M752,386.5h3 M758,386.5h3 M764,386.5h3 M770,386.5h3 M776,386.5h3 M782,386.5h3 M788,386.5h3 M794,386.5h3 M800,386.5h3 M806,386.5h3 M812,386.5h3 M818,386.5h3 M824,386.5h3 M830,386.5h3 M836,386.5h3 M842,386.5h3 M848,386.5h3 M854,386.5h3 M860,386.5h3 M866,386.5h3 M872,386.5h3 M878,386.5h3 M884,386.5h3 M890,386.5h3 M896,386.5h3 M902,386.5h3 M908,386.5h3 M914,386.5h3 M920,386.5h3 M926,386.5h3 M932,386.5h3 M938,386.5h3 M944,386.5h3 M950,386.5h3 M956,386.5h3 M962,386.5h3 M968,386.5h3 M974,386.5h3 M980,386.5h3 M986,386.5h3 M992,386.5h3 M998,386.5h3 M1004,386.5h3 M1010,386.5h3 M1016,386.5h3 M1022,386.5h3 M1028,386.5h3 M1034,386.5h3 M1040,386.5h3 M1046,386.5h3 M1052,386.5h3 M1058,386.5h3 M1064,386.5h3 M1070,386.5h3 M1076,386.5h3 M1082,386.5h3 M1088,386.5h3 M1094,386.5h3" stroke="#a0a0a0" stroke-width="1" fill="none"/><path d="M74,360.5h3 M80,360.5h3 M86,360.5h3 M92,360.5h3 M98,360.5h3 M104,360.5h3 M110,360.5h3 M116,360.5h3 M122,360.5h3 M128,360.5h3 M134,360.5h3 M140,360.5h3 M146,360.5h3 M152,360.5h3 M158,360.5h3 M164,360.5h3 M170,360.5h3 M176,360.5h3 M182,360.5h3 M188,360.5h3 M194,360.5h3 M200,360.5h3 M206,360.5h3 M212,360.5h3 M218,360.5h3 M224,360.5h3 M230,360.5h3 M236,360.5h3 M242,360.5h3 M248,360.5h3 M254,360.5h3 M260,360.5h3 M266,360.5h3 M272,360.5h3 M278,360.5h3 M284,360.5h3 M290,360.5h3 M296,360.5h3 M302,360.5h3 M308,360.5h3 M314,360.5h3 M320,360.5h3 M326,360.5h3 M332,360.5h3 M338,360.5h3 M344,360.5h3 M350,360.5h3 M356,360.5h3 M362,360.5h3 M368,360.5h3 M374,360.5h3 M380,360.5h3 M386,360.5h3 M392,360.5h3 M398,360.5h3 M404,360.5h3 M410,360.5h3 M416,360.5h3 M422,360.5h3 M428,360.5h3 M434,360.5h3 M440,360.5h3 M446,360.5h3 M452,360.5h3 M458,360.5h3 M464,360.5h3 M470,360.5h3 M476,360.5h3 M482,360.5h3 M488,360.5h3 M494,360.5h3 M500,360.5h3 M506,360.5h3 M512,360.5h3 M518,360.5h3 M524,360.5h3 M530,360.5h3 M536,360.5h3 M542,360.5h3 M548,360.5h3 M554,360.5h3 M560,360.5h3 M566,360.5h3 M572,360.5h3 M578,360.5h3 M584,360.5h3 M590,360.5h3 M596,360.5h3 M602,360.5h3 M608,360.5h3 M614,360.5h3 M620,360.5h3 M626,360.5h3 M632,360.5h3 M638,360.5h3 M644,360.5h3 M650,360.5h3 M656,360.5h3 M662,360.5h3 M668,360.5h3 M674,360.5h3 M680,360.5h3 M686,360.5h3 M692,360.5h3 M698,360.5h3 M704,360.5h3 M710,360.5h3 M716,360.5h3 M722,360.5h3 M728,360.5h3 M734,360.5h3 M740,360.5h3 M746,360.5h3 M752,360.5h3 M758,360.5h3 M764,360.5h3 M770,360.5h3 M776,360.5h3 M782,360.5h3 M788,360.5h3 M794,360.5h3 M800,360.5h3 M806,360.5h3 M812,360.5h3 M818,360.5h3 M824,360.5h3 M830,360.5h3 M836,360.5h3 M842,360.5h3 M848,360.5h3 M854,360.5h3 M860,360.5h3 M866,360.5h3 M872,360.5h3 M878,360.5h3 M884,360.5h3 M890,360.5h3 M896,360.5h3 M902,360.5h3 M908,360.5h3 M914,360.5h3 M920,360.5h3 M926,360.5h3 M932,360.5h3 M938,360.5h3 M944,360.5h3 M950,360.5h3 M956,360.5h3 M962,360.5h3 M968,360.5h3 M974,360.5h3 M980,360.5h3 M986,360.5h3 M992,360.5h3 M998,360.5h3 M1004,360.5h3 M1010,360.5h3 M1016,360.5h3 M1022,360.5h3 M1028,360.5h3 M1034,360.5h3 M1040,360.5h3 M1046,360.5h3 M1052,360.5h3 M1058,360.5h3 M1064,360.5h3 M1070,360.5h3 M1076,360.5h3 M1082,360.5h3 M1088,360.5h3 M1094,360.5h3" stroke="#a0a0a0" stroke-width="1" fill="none"/><path d="M74,333.5h3 M80,333.5h3 M86,333.5h3 M92,333.5h3 M98,333.5h3 M104,333.5h3 M110,333.5h3 M116,333.5h3 M122,333.5h3 M128,333.5h3 M134,333.5h3 M140,333.5h3 M146,333.5h3 M152,333.5h3 M158,333.5h3 M164,333.5h3 M170,333.5h3 M176,333.5h3 M182,333.5h3 M188,333.5h3 M194,333.5h3 M200,333.5h3 M206,333.5h3 M212,333.5h3 M218,333.5h3 M224,333.5h3 M230,333.5h3 M236,333.5h3 M242,333.5h3 M248,333.5h3 M254,333.5h3 M260,333.5h3 M266,333.5h3 M272,333.5h3 M278,333.5h3 M284,333.5h3 M290,333.5h3 M296,333.5h3 M302,333.5h3 M308,333.5h3 M314,333.5h3 M320,333.5h3 M326,333.5h3 M332,333.5h3 M338,333.5h3 M344,333.5h3 M350,333.5h3 M356,333.5h3 M362,333.5h3 M368,333.5h3 M374,333.5h3 M380,333.5h3 M386,333.5h3 M392,333.5h3 M398,333.5h3 M404,333.5h3 M410,333.5h3 M416,333.5h3 M422,333.5h3 M428,333.5h3 M434,333.5h3 M440,333.5h3 M446,333.5h3 M452,333.5h3 M458,333.5h3 M464,333.5h3 M470,333.5h3 M476,333.5h3 M482,333.5h3 M488,333.5h3 M494,333.5h3 M500,333.5h3 M506,333.5h3 M512,333.5h3 M518,333.5h3 M524,333.5h3 M530,333.5h3 M536,333.5h3 M542,333.5h3 M548,333.5h3 M554,333.5h3 M560,333.5h3 M566,333.5h3 M572,333.5h3 M578,333.5h3 M584,333.5h3 M590,333.5h3 M596,333.5h3 M602,333.5h3 M608,333.5h3 M614,333.5h3 M620,333.5h3 M626,333.5h3 M632,333.5h3 M638,333.5h3 M644,333.5h3 M650,333.5h3 M656,333.5h3 M662,333.5h3 M668,333.5h3 M674,333.5h3 M680,333.5h3 M686,333.5h3 M692,333.5h3 M698,333.5h3 M704,333.5h3 M710,333.5h3 M716,333.5h3 M722,333.5h3 M728,333.5h3 M734,333.5h3 M740,333.5h3 M746,333.5h3 M752,333.5h3 M758,333.5h3 M764,333.5h3 M770,333.5h3 M776,333.5h3 M782,333.5h3 M788,333.5h3 M794,333.5h3 M800,333.5h3 M806,333.5h3 M812,333.5h3 M818,333.5h3 M824,333.5h3 M830,333.5h3 M836,333.5h3 M842,333.5h3 M848,333.5h3 M854,333.5h3 M860,333.5h3 M866,333.5h3 M872,333.5h3 M878,333.5h3 M884,333.5h3 M890,333.5h3 M896,333.5h3 M902,333.5h3 M908,333.5h3 M914,333.5h3 M920,333.5h3 M926,333.5h3 M932,333.5h3 M938,333.5h3 M944,333.5h3 M950,333.5h3 M956,333.5h3 M962,333.5h3 M968,333.5h3 M974,333.5h3 M980,333.5h3 M986,333.5h3 M992,333.5h3 M998,333.5h3 M1004,333.5h3 M1010,333.5h3 M1016,333.5h3 M1022,333.5h3 M1028,333.5h3 M1034,333.5h3 M1040,333.5h3 M1046,333.5h3 M1052,333.5h3 M1058,333.5h3 M1064,333.5h3 M1070,333.5h3 M1076,333.5h3 M1082,333.5h3 M1088,333.5h3 M1094,333.5h3" stroke="#a0a0a0" stroke-width="1" fill="none"/><path d="M74,306.5h3 M80,306.5h3 M86,306.5h3 M92,306.5h3 M98,306.5h3 M104,306.5h3 M110,306.5h3 M116,306.5h3 M122,306.5h3 M128,306.5h3 M134,306.5h3 M140,306.5h3 M146,306.5h3 M152,306.5h3 M158,306.5h3 M164,306.5h3 M170,306.5h3 M176,306.5h3 M182,306.5h3 M188,306.5h3 M194,306.5h3 M200,306.5h3 M206,306.5h3 M212,306.5h3 M218,306.5h3 M224,306.5h3 M230,306.5h3 M236,306.5h3 M242,306.5h3 M248,306.5h3 M254,306.5h3 M260,306.5h3 M266,306.5h3 M272,306.5h3 M278,306.5h3 M284,306.5h3 M290,306.5h3 M296,306.5h3 M302,306.5h3 M308,306.5h3 M314,306.5h3 M320,306.5h3 M326,306.5h3 M332,306.5h3 M338,306.5h3 M344,306.5h3 M350,306.5h3 M356,306.5h3 M362,306.5h3 M368,306.5h3 M374,306.5h3 M380,306.5h3 M386,306.5h3 M392,306.5h3 M398,306.5h3 M404,306.5h3 M410,306.5h3 M416,306.5h3 M422,306.5h3 M428,306.5h3 M434,306.5h3 M440,306.5h3 M446,306.5h3 M452,306.5h3 M458,306.5h3 M464,306.5h3 M470,306.5h3 M476,306.5h3 M482,306.5h3 M488,306.5h3 M494,306.5h3 M500,306.5h3 M506,306.5h3 M512,306.5h3 M518,306.5h3 M524,306.5h3 M530,306.5h3 M536,306.5h3 M542,306.5h3 M548,306.5h3 M554,306.5h3 M560,306.5h3 M566,306.5h3 M572,306.5h3 M578,306.5h3 M584,306.5h3 M590,306.5h3 M596,306.5h3 M602,306.5h3 M608,306.5h3 M614,306.5h3 M620,306.5h3 M626,306.5h3 M632,306.5h3 M638,306.5h3 M644,306.5h3 M650,306.5h3 M656,306.5h3 M662,306.5h3 M668,306.5h3 M674,306.5h3 M680,306.5h3 M686,306.5h3 M692,306.5h3 M698,306.5h3 M704,306.5h3 M710,306.5h3 M716,306.5h3 M722,306.5h3 M728,306.5h3 M734,306.5h3 M740,306.5h3 M746,306.5h3 M752,306.5h3 M758,306.5h3 M764,306.5h3 M770,306.5h3 M776,306.5h3 M782,306.5h3 M788,306.5h3 M794,306.5h3 M800,306.5h3 M806,306.5h3 M812,306.5h3 M818,306.5h3 M824,306.5h3 M830,306.5h3 M836,306.5h3 M842,306.5h3 M848,306.5h3 M854,306.5h3 M860,306.5h3 M866,306.5h3 M872,306.5h3 M878,306.5h3 M884,306.5h3 M890,306.5h3 M896,306.5h3 M902,306.5h3 M908,306.5h3 M914,306.5h3 M920,306.5h3 M926,306.5h3 M932,306.5h3 M938,306.5h3 M944,306.5h3 M950,306.5h3 M956,306.5h3 M962,306.5h3 M968,306.5h3 M974,306.5h3 M980,306.5h3 M986,306.5h3 M992,306.5h3 M998,306.5h3 M1004,306.5h3 M1010,306.5h3 M1016,306.5h3 M1022,306.5h3 M1028,306.5h3 M1034,306.5h3 M1040,306.5h3 M1046,306.5h3 M1052,306.5h3 M1058,306.5h3 M1064,306.5h3 M1070,306.5h3 M1076,306.5h3 M1082,306.5h3 M1088,306.5h3 M1094,306.5h3" stroke="#a0a0a0" stroke-width="1" fill="none"/><path d="M74,280.5h3 M80,280.5h3 M86,280.5h3 M92,280.5h3 M98,280.5h3 M104,280.5h3 M110,280.5h3 M116,280.5h3 M122,280.5h3 M128,280.5h3 M134,280.5h3 M140,280.5h3 M146,280.5h3 M152,280.5h3 M158,280.5h3 M164,280.5h3 M170,280.5h3 M176,280.5h3 M182,280.5h3 M188,280.5h3 M194,280.5h3 M200,280.5h3 M206,280.5h3 M212,280.5h3 M218,280.5h3 M224,280.5h3 M230,280.5h3 M236,280.5h3 M242,280.5h3 M248,280.5h3 M254,280.5h3 M260,280.5h3 M266,280.5h3 M272,280.5h3 M278,280.5h3 M284,280.5h3 M290,280.5h3 M296,280.5h3 M302,280.5h3 M308,280.5h3 M314,280.5h3 M320,280.5h3 M326,280.5h3 M332,280.5h3 M338,280.5h3 M344,280.5h3 M350,280.5h3 M356,280.5h3 M362,280.5h3 M368,280.5h3 M374,280.5h3 M380,280.5h3 M386,280.5h3 M392,280.5h3 M398,280.5h3 M404,280.5h3 M410,280.5h3 M416,280.5h3 M422,280.5h3 M428,280.5h3 M434,280.5h3 M440,280.5h3 M446,280.5h3 M452,280.5h3 M458,280.5h3 M464,280.5h3 M470,280.5h3 M476,280.5h3 M482,280.5h3 M488,280.5h3 M494,280.5h3 M500,280.5h3 M506,280.5h3 M512,280.5h3 M518,280.5h3 M524,280.5h3 M530,280.5h3 M536,280.5h3 M542,280.5h3 M548,280.5h3 M554,280.5h3 M560,280.5h3 M566,280.5h3 M572,280.5h3 M578,280.5h3 M584,280.5h3 M590,280.5h3 M596,280.5h3 M602,280.5h3 M608,280.5h3 M614,280.5h3 M620,280.5h3 M626,280.5h3 M632,280.5h3 M638,280.5h3 M644,280.5h3 M650,280.5h3 M656,280.5h3 M662,280.5h3 M668,280.5h3 M674,280.5h3 M680,280.5h3 M686,280.5h3 M692,280.5h3 M698,280.5h3 M704,280.5h3 M710,280.5h3 M716,280.5h3 M722,280.5h3 M728,280.5h3 M734,280.5h3 M740,280.5h3 M746,280.5h3 M752,280.5h3 M758,280.5h3 M764,280.5h3 M770,280.5h3 M776,280.5h3 M782,280.5h3 M788,280.5h3 M794,280.5h3 M800,280.5h3 M806,280.5h3 M812,280.5h3 M818,280.5h3 M824,280.5h3 M830,280.5h3 M836,280.5h3 M842,280.5h3 M848,280.5h3 M854,280.5h3 M860,280.5h3 M866,280.5h3 M872,280.5h3 M878,280.5h3 M884,280.5h3 M890,280.5h3 M896,280.5h3 M902,280.5h3 M908,280.5h3 M914,280.5h3 M920,280.5h3 M926,280.5h3 M932,280.5h3 M938,280.5h3 M944,280.5h3 M950,280.5h3 M956,280.5h3 M962,280.5h3 M968,280.5h3 M974,280.5h3 M980,280.5h3 M986,280.5h3 M992,280.5h3 M998,280.5h3 M1004,280.5h3 M1010,280.5h3 M1016,280.5h3 M1022,280.5h3 M1028,280.5h3 M1034,280.5h3 M1040,280.5h3 M1046,280.5h3 M1052,280.5h3 M1058,280.5h3 M1064,280.5h3 M1070,280.5h3 M1076,280.5h3 M1082,280.5h3 M1088,280.5h3 M1094,280.5h3" stroke="#a0a0a0" stroke-width="1" fill="none"/><path d="M71,626.5h2 M1099,626.5h2 M71,619.5h2 M1099,619.5h2 M71,612.5h2 M1099,612.5h2 M71,606.5h2 M1099,606.5h2 M71,599.5h2 M1099,599.5h2 M71,592.5h2 M1099,592.5h2 M71,586.5h2 M1099,586.5h2 M71,580.5h2 M1099,580.5h2 M71,573.5h2 M1099,573.5h2 M71,566.5h2 M1099,566.5h2 M71,560.5h2 M1099,560.5h2 M71,553.5h2 M1099,553.5h2 M71,546.5h2 M1099,546.5h2 M71,539.5h2 M1099,539.5h2 M71,532.5h2 M1099,532.5h2 M71,526.5h2 M1099,526.5h2 M71,519.5h2 M1099,519.5h2 M71,512.5h2 M1099,512.5h2 M71,506.5h2 M1099,506.5h2 M71,500.5h2 M1099,500.5h2 M71,493.5h2 M1099,493.5h2 M71,486.5h2 M1099,486.5h2 M71,480.5h2 M1099,480.5h2 M71,473.5h2 M1099,473.5h2 M71,466.5h2 M1099,466.5h2 M71,460.5h2 M1099,460.5h2 M71,453.5h2 M1099,453.5h2 M71,446.5h2 M1099,446.5h2 M71,440.5h2 M1099,440.5h2 M71,433.5h2 M1099,433.5h2 M71,426.5h2 M1099,426.5h2 M71,420.5h2 M1099,420.5h2 M71,413.5h2 M1099,413.5h2 M71,406.5h2 M1099,406.5h2 M71,400.5h2 M1099,400.5h2 M71,393.5h2 M1099,393.5h2 M71,386.5h2 M1099,386.5h2 M71,380.5h2 M1099,380.5h2 M71,373.5h2 M1099,373.5h2 M71,366.5h2 M1099,366.5h2 M71,360.5h2 M1099,360.5h2 M71,353.5h2 M1099,353.5h2 M71,346.5h2 M1099,346.5h2 M71,340.5h2 M1099,340.5h2 M71,333.5h2 M1099,333.5h2 M71,326.5h2 M1099,326.5h2 M71,320.5h2 M1099,320.5h2 M71,313.5h2 M1099,313.5h2 M71,306.5h2 M1099,306.5h2 M71,300.5h2 M1099,300.5h2 M71,293.5h2 M1099,293.5h2 M71,286.5h2 M1099,286.5h2 M71,280.5h2 M1099,280.5h2 M71,274.5h2 M1099,274.5h2" stroke="#a0a0a0" stroke-width="1" fill="none"/><polyline points="96.9,598.8 143.5,626.5 190.1,604.8 236.7,603.3 283.3,601.2 330.0,590.5 376.6,588.5 423.2,586.5 469.8,586.3 516.4,585.8 563.0,585.5 609.6,585.3 656.2,584.5 702.8,583.3 749.4,581.3 796.0,576.7 842.7,568.7 889.3,568.4 935.9,566.5 982.5,626.5 1029.1,357.5" fill="none" stroke="#0000ff" stroke-width="1" shape-rendering="crispEdges"/><path d="M143,448.5 H981 M975,444.5 L982,448.5 L975,452" fill="none" stroke="#0c94dc" stroke-width="1" shape-rendering="crispEdges"/><rect x="888" y="287" width="2" height="10" fill="#00ff00"/><rect x="888" y="297" width="2" height="329" fill="#90f090"/><rect x="888" y="626" width="2" height="5" fill="#a0a0a0"/><rect x="854.5" y="267" width="72" height="20" rx="8" fill="#8a4a10"/><rect x="852.5" y="265.5" width="72" height="19" rx="8" fill="#fff" stroke="#ff7f00" stroke-width="1.2"/></svg>
<div class="t" style="right:1271.4px;top:620.71px;font-size:11px;line-height:11px;color:#fff">0</div>
<div class="t" style="left:1103px;top:620.71px;font-size:11px;line-height:11px;font-weight:400;color:#fff;">0</div>
<div class="t" style="right:1271.4px;top:593.71px;font-size:11px;line-height:11px;color:#fff">5.000</div>
<div class="t" style="left:1103px;top:593.71px;font-size:11px;line-height:11px;font-weight:400;color:#fff;">5.000</div>
<div class="t" style="right:1271.4px;top:567.71px;font-size:11px;line-height:11px;color:#fff">10.000</div>
<div class="t" style="left:1103px;top:567.71px;font-size:11px;line-height:11px;font-weight:400;color:#fff;">10.000</div>
<div class="t" style="right:1271.4px;top:540.71px;font-size:11px;line-height:11px;color:#fff">15.000</div>
<div class="t" style="left:1103px;top:540.71px;font-size:11px;line-height:11px;font-weight:400;color:#fff;">15.000</div>
<div class="t" style="right:1271.4px;top:513.71px;font-size:11px;line-height:11px;color:#fff">20.000</div>
<div class="t" style="left:1103px;top:513.71px;font-size:11px;line-height:11px;font-weight:400;color:#fff;">20.000</div>
<div class="t" style="right:1271.4px;top:487.71px;font-size:11px;line-height:11px;color:#fff">25.000</div>
<div class="t" style="left:1103px;top:487.71px;font-size:11px;line-height:11px;font-weight:400;color:#fff;">25.000</div>
<div class="t" style="right:1271.4px;top:460.71px;font-size:11px;line-height:11px;color:#fff">30.000</div>
<div class="t" style="left:1103px;top:460.71px;font-size:11px;line-height:11px;font-weight:400;color:#fff;">30.000</div>
<div class="t" style="right:1271.4px;top:434.71px;font-size:11px;line-height:11px;color:#fff">35.000</div>
<div class="t" style="left:1103px;top:434.71px;font-size:11px;line-height:11px;font-weight:400;color:#fff;">35.000</div>
<div class="t" style="right:1271.4px;top:407.71px;font-size:11px;line-height:11px;color:#fff">40.000</div>
<div class="t" style="left:1103px;top:407.71px;font-size:11px;line-height:11px;font-weight:400;color:#fff;">40.000</div>
<div class="t" style="right:1271.4px;top:380.71px;font-size:11px;line-height:11px;color:#fff">45.000</div>
<div class="t" style="left:1103px;top:380.71px;font-size:11px;line-height:11px;font-weight:400;color:#fff;">45.000</div>
<div class="t" style="right:1271.4px;top:354.71px;font-size:11px;line-height:11px;color:#fff">50.000</div>
<div class="t" style="left:1103px;top:354.71px;font-size:11px;line-height:11px;font-weight:400;color:#fff;">50.000</div>
<div class="t" style="right:1271.4px;top:327.71px;font-size:11px;line-height:11px;color:#fff">55.000</div>
<div class="t" style="left:1103px;top:327.71px;font-size:11px;line-height:11px;font-weight:400;color:#fff;">55.000</div>
<div class="t" style="right:1271.4px;top:300.71px;font-size:11px;line-height:11px;color:#fff">60.000</div>
<div class="t" style="left:1103px;top:300.71px;font-size:11px;line-height:11px;font-weight:400;color:#fff;">60.000</div>
<div class="t" style="right:1271.4px;top:274.71px;font-size:11px;line-height:11px;color:#fff">65.000</div>
<div class="t" style="left:1103px;top:274.71px;font-size:11px;line-height:11px;font-weight:400;color:#fff;">65.000</div>
<div class="t" style="left:442.7px;top:249.77px;font-size:13px;line-height:13px;font-weight:700;color:#fff;letter-spacing:0.1px">limitatore di coppia (map 1/1) - 19x1 - 0x07872E</div>
<div class="t" style="left:857.9px;top:268.47px;font-size:13px;line-height:13px;font-weight:700;color:#000;letter-spacing:-0.1px">4500 RPM</div>
<div class="t" style="left:870px;top:635.61px;font-size:11px;line-height:11px;font-weight:400;color:#fff;letter-spacing:-0.3px">07874E</div>
<div style="left:1187px;top:234px;width:18px;height:422px;border-left:2px solid #a0a0a0;border-top:2px solid #a0a0a0;border-right:1px solid #fff;border-bottom:1px solid #fff;background:linear-gradient(90deg,#e8e8e8,#f1f1f1 50%,#ebebeb)"></div>
<svg style="position:absolute;left:1194px;top:242px;" width="7" height="4" viewBox="0 0 7 4" shape-rendering="crispEdges"><polygon points="0,4 3.5,0 7,4" fill="#7a7a7a"/></svg>
<svg style="position:absolute;left:1194px;top:646px;" width="7" height="4" viewBox="0 0 7 4" shape-rendering="crispEdges"><polygon points="0,0 3.5,4 7,0" fill="#7a7a7a"/></svg>
<div style="left:1211px;top:199px;width:140px;height:49px;border:1px solid #d5dfe5;border-radius:3px"></div>
<div style="left:1219px;top:194px;width:50px;height:10px;background:#f0f0f0"></div>
<div class="t" style="left:1222.6px;top:193.79px;font-size:12px;line-height:12px;font-weight:700;color:#000;letter-spacing:-0.5px">Cursore</div>
<div style="left:1333px;top:192px;width:8px;height:20px;border-left:2px solid #6a6a6a;border-top:2px solid #6a6a6a;background:#fff"></div>
<svg style="position:absolute;left:1335px;top:196px;" width="4" height="13" viewBox="0 0 4 13" shape-rendering="crispEdges"><g stroke="#ff0" stroke-width="1.2"><line x1="1" y1="0.5" x2="3" y2="3.5"/><line x1="0" y1="6.5" x2="4" y2="6.5"/><line x1="1" y1="12" x2="3" y2="9"/></g><rect x="3" y="8" width="1" height="4" fill="#000"/></svg>
<div style="left:1214px;top:210px;width:12px;height:12px;border:1px solid #8f8f8f;background:linear-gradient(135deg,#dcdcdc,#f8f8f8)"></div>
<div class="t" style="left:1231.2px;top:210.29px;font-size:12px;line-height:12px;font-weight:700;color:#000;">ORI &gt;&gt; MOD</div>
<div style="left:1214px;top:226px;width:12px;height:12px;border:1px solid #8f8f8f;background:linear-gradient(135deg,#dcdcdc,#f8f8f8)"></div>
<svg style="position:absolute;left:1215px;top:227px;" width="10" height="10" viewBox="0 0 10 10" shape-rendering="crispEdges"><polyline points="2,5 4,8 9,1" fill="none" stroke="#3050a0" stroke-width="1.8"/></svg>
<div class="t" style="left:1231.2px;top:226.59px;font-size:12px;line-height:12px;font-weight:700;color:#000;letter-spacing:-0.1px">Max var.</div>
<div class="fld" style="left:1290px;top:222px;width:33px;height:21px"></div>
<div class="t" style="left:1293px;top:226.09px;font-size:12px;line-height:12px;font-weight:700;color:#000;">15</div>
<div style="left:1325px;top:223px;width:14px;height:9px;border:1px solid #a4a6aa;border-radius:1px;background:linear-gradient(#f4f4f4,#e8e8e8);box-shadow:inset 0 0 0 1px #fafafa"></div>
<div style="left:1325px;top:233px;width:14px;height:10px;border:1px solid #a4a6aa;border-radius:1px;background:linear-gradient(#f4f4f4,#e8e8e8);box-shadow:inset 0 0 0 1px #fafafa"></div>
<svg style="position:absolute;left:1328px;top:225px;" width="7" height="4" viewBox="0 0 7 4" shape-rendering="crispEdges"><rect x="3" y="0" width="1" height="1" fill="#5070c0"/><rect x="2" y="1" width="3" height="1" fill="#5070c0"/><rect x="1" y="2" width="5" height="1" fill="#5070c0"/></svg>
<svg style="position:absolute;left:1328px;top:237px;" width="7" height="4" viewBox="0 0 7 4" shape-rendering="crispEdges"><rect x="1" y="0" width="5" height="1" fill="#5070c0"/><rect x="2" y="1" width="3" height="1" fill="#5070c0"/><rect x="3" y="2" width="1" height="1" fill="#5070c0"/></svg>
<div style="left:1211px;top:256px;width:140px;height:219px;border:1px solid #d5dfe5;border-radius:3px"></div>
<div style="left:1218px;top:250px;width:94px;height:10px;background:#f0f0f0"></div>
<div class="t" style="left:1221.6px;top:250.19px;font-size:12px;line-height:12px;font-weight:700;color:#000;letter-spacing:-0.1px">Visualizzazione</div>
<div style="left:1216px;top:268px;width:130px;height:30px;border:1px solid #fff;border-bottom-color:#a0a0a0;border-right-color:#a0a0a0"></div>
<svg style="position:absolute;left:1220px;top:279px;" width="12" height="12" viewBox="0 0 12 12" shape-rendering="crispEdges"><circle cx="6" cy="6" r="5.5" fill="#f0f0f0" stroke="#b8b8b8"/><circle cx="6" cy="6" r="3" fill="#8a8a8a"/></svg>
<div class="t" style="left:1236.7px;top:278.59px;font-size:12px;line-height:12px;font-weight:700;color:#6d6d6d;">IEEE</div>
<svg style="position:absolute;left:1278px;top:279px;" width="12" height="12" viewBox="0 0 12 12" shape-rendering="crispEdges"><circle cx="6" cy="6" r="5.5" fill="#f0f0f0" stroke="#b8b8b8"/></svg>
<div class="t" style="left:1294.7px;top:279.09px;font-size:12px;line-height:12px;font-weight:700;color:#6d6d6d;">Motorola</div>
<div style="left:1216px;top:298px;width:130px;height:76px;border:1px solid #fff;border-bottom-color:#a0a0a0;border-right-color:#a0a0a0"></div>
<svg style="position:absolute;left:1220px;top:303.8px;" width="12" height="12" viewBox="0 0 12 12" shape-rendering="crispEdges"><circle cx="6" cy="6" r="5.5" fill="#f0f0f0" stroke="#b8b8b8"/></svg>
<div class="t" style="left:1236.5px;top:303.99px;font-size:12px;line-height:12px;font-weight:700;color:#6d6d6d;letter-spacing:-0.1px">8 bit</div>
<svg style="position:absolute;left:1220px;top:322.1px;" width="12" height="12" viewBox="0 0 12 12" shape-rendering="crispEdges"><circle cx="6" cy="6" r="5.5" fill="#f0f0f0" stroke="#b8b8b8"/><circle cx="6" cy="6" r="3" fill="#8a8a8a"/></svg>
<div class="t" style="left:1236.5px;top:322.29px;font-size:12px;line-height:12px;font-weight:700;color:#6d6d6d;letter-spacing:-0.1px">16 bit</div>
<svg style="position:absolute;left:1220px;top:339.7px;" width="12" height="12" viewBox="0 0 12 12" shape-rendering="crispEdges"><circle cx="6" cy="6" r="5.5" fill="#f0f0f0" stroke="#b8b8b8"/></svg>
<div class="t" style="left:1236.5px;top:339.89px;font-size:12px;line-height:12px;font-weight:700;color:#6d6d6d;letter-spacing:-0.1px">32 bit</div>
<svg style="position:absolute;left:1220px;top:357px;" width="12" height="12" viewBox="0 0 12 12" shape-rendering="crispEdges"><circle cx="6" cy="6" r="5.5" fill="#f0f0f0" stroke="#b8b8b8"/></svg>
<div class="t" style="left:1236.5px;top:357.19px;font-size:12px;line-height:12px;font-weight:700;color:#6d6d6d;letter-spacing:-0.1px">Virgola mobile</div>
<div style="left:1307px;top:304px;width:12px;height:12px;border:1px solid #b0b0b0;background:#f4f4f4"></div>
<div class="t" style="left:1323px;top:303.99px;font-size:12px;line-height:12px;font-weight:700;color:#6d6d6d;">+/-</div>
<div style="left:1216px;top:406px;width:130px;height:1px;background:#a0a0a0"></div>
<div style="left:1216px;top:407px;width:130px;height:1px;background:#fff"></div>
<div class="t" style="left:1220px;top:384.89px;font-size:12px;line-height:12px;font-weight:700;color:#000;letter-spacing:-0.35px">Allineamento:</div>
<div class="fld" style="left:1308px;top:381px;width:24px;height:21px"></div>
<div class="t" style="left:1311px;top:384.89px;font-size:12px;line-height:12px;font-weight:700;color:#000;">0</div>
<div style="left:1333px;top:382px;width:14px;height:9px;border:1px solid #a4a6aa;border-radius:1px;background:linear-gradient(#f4f4f4,#e8e8e8);box-shadow:inset 0 0 0 1px #fafafa"></div>
<div style="left:1333px;top:392px;width:14px;height:10px;border:1px solid #a4a6aa;border-radius:1px;background:linear-gradient(#f4f4f4,#e8e8e8);box-shadow:inset 0 0 0 1px #fafafa"></div>
<svg style="position:absolute;left:1336px;top:384px;" width="7" height="4" viewBox="0 0 7 4" shape-rendering="crispEdges"><rect x="3" y="0" width="1" height="1" fill="#5070c0"/><rect x="2" y="1" width="3" height="1" fill="#5070c0"/><rect x="1" y="2" width="5" height="1" fill="#5070c0"/></svg>
<svg style="position:absolute;left:1336px;top:396px;" width="7" height="4" viewBox="0 0 7 4" shape-rendering="crispEdges"><rect x="1" y="0" width="5" height="1" fill="#5070c0"/><rect x="2" y="1" width="3" height="1" fill="#5070c0"/><rect x="3" y="2" width="1" height="1" fill="#5070c0"/></svg>
<div style="left:1220px;top:416px;width:12px;height:12px;border:1px solid #8f8f8f;background:linear-gradient(135deg,#dcdcdc,#f8f8f8)"></div>
<svg style="position:absolute;left:1221px;top:417px;" width="10" height="10" viewBox="0 0 10 10" shape-rendering="crispEdges"><polyline points="2,5 4,8 9,1" fill="none" stroke="#3050a0" stroke-width="1.8"/></svg>
<div class="t" style="left:1236.5px;top:416.19px;font-size:12px;line-height:12px;font-weight:700;color:#000;letter-spacing:-0.1px">Usa info driver</div>
<div style="left:1220px;top:432px;width:12px;height:12px;border:1px solid #8f8f8f;background:linear-gradient(135deg,#dcdcdc,#f8f8f8)"></div>
<svg style="position:absolute;left:1221px;top:433px;" width="10" height="10" viewBox="0 0 10 10" shape-rendering="crispEdges"><polyline points="2,5 4,8 9,1" fill="none" stroke="#3050a0" stroke-width="1.8"/></svg>
<div class="t" style="left:1236.5px;top:432.19px;font-size:12px;line-height:12px;font-weight:700;color:#000;letter-spacing:-0.15px">Usa ultima mappa</div>
<div class="t" style="left:1217.2px;top:456.39px;font-size:12px;line-height:12px;font-weight:700;color:#000;letter-spacing:-0.3px">Zoom V:</div>
<div style="left:1270px;top:451px;width:80px;height:15px;background:#e7eaea;border:1px solid #fff;border-top-color:#a8a8a8;border-left-color:#a8a8a8"></div>
<div style="left:1271px;top:449px;width:9px;height:20px;border:1px solid #707070;border-radius:2px;background:linear-gradient(#f8f8f8 0%,#ececec 45%,#dcdcdc 50%,#d4d4d4 100%);box-shadow:inset 0 0 0 1px #fff"></div>
<div style="left:1211px;top:628px;width:140px;height:80px;border:1px solid #d5dfe5;border-radius:3px"></div>
<div style="left:1218px;top:622px;width:90px;height:10px;background:#f0f0f0"></div>
<div class="t" style="left:1221.2px;top:622.19px;font-size:12px;line-height:12px;font-weight:700;color:#000;letter-spacing:-0.1px">Memo indirizzi</div>
<div style="left:1220px;top:637px;width:130px;height:71px;border-left:1px solid #a0a0a0;border-top:1px solid #a0a0a0"></div>
<div class="t" style="left:1214.6px;width:40px;text-align:center;top:644.89px;font-size:12px;line-height:12px;font-weight:700;color:#a8a8a8">1</div>
<div class="t" style="left:1237.8px;width:40px;text-align:center;top:644.89px;font-size:12px;line-height:12px;font-weight:700;color:#a8a8a8">2</div>
<div class="t" style="left:1261.0px;width:40px;text-align:center;top:644.89px;font-size:12px;line-height:12px;font-weight:700;color:#a8a8a8">3</div>
<div class="t" style="left:1284.1999999999998px;width:40px;text-align:center;top:644.89px;font-size:12px;line-height:12px;font-weight:700;color:#a8a8a8">4</div>
<div class="t" style="left:1307.3999999999999px;width:40px;text-align:center;top:644.89px;font-size:12px;line-height:12px;font-weight:700;color:#a8a8a8">5</div>
<div class="t" style="left:1214.6px;width:40px;text-align:center;top:666.59px;font-size:12px;line-height:12px;font-weight:700;color:#a8a8a8">6</div>
<div class="t" style="left:1237.8px;width:40px;text-align:center;top:666.59px;font-size:12px;line-height:12px;font-weight:700;color:#a8a8a8">7</div>
<div class="t" style="left:1261.0px;width:40px;text-align:center;top:666.59px;font-size:12px;line-height:12px;font-weight:700;color:#a8a8a8">8</div>
<div class="t" style="left:1284.1999999999998px;width:40px;text-align:center;top:666.59px;font-size:12px;line-height:12px;font-weight:700;color:#a8a8a8">9</div>
<div class="t" style="left:1307.3999999999999px;width:40px;text-align:center;top:666.59px;font-size:12px;line-height:12px;font-weight:700;color:#a8a8a8">10</div>
<div class="t" style="left:1214.6px;width:40px;text-align:center;top:688.59px;font-size:12px;line-height:12px;font-weight:700;color:#a8a8a8">11</div>
<div class="t" style="left:1237.8px;width:40px;text-align:center;top:688.59px;font-size:12px;line-height:12px;font-weight:700;color:#a8a8a8">12</div>
<svg style="position:absolute;left:1273px;top:686px;" width="17" height="16" viewBox="0 0 17 16" shape-rendering="crispEdges"><polygon points="6,0 13,0 16,3 16,15 6,15" fill="#000"/><polygon points="7,1 12,1 15,4 15,14 7,14" fill="#fff"/><g fill="#000"><rect x="10" y="3" width="2" height="1"/><rect x="12" y="6" width="2" height="1"/><rect x="12" y="9" width="2" height="1"/><rect x="9" y="12" width="2" height="1"/><rect x="12" y="12" width="2" height="1"/></g><polygon points="0,7 5,6 12,11 8,12 8,14 1,14" fill="#000"/><polygon points="1,8 5,7 10,11 7,11 7,13 2,13" fill="#ffff40"/><rect x="0" y="8" width="1" height="5" fill="#0ff"/><line x1="2" y1="1" x2="11" y2="10" stroke="#000" stroke-width="1.6"/><line x1="2.5" y1="1" x2="10.5" y2="9" stroke="#ff0" stroke-width="0.8"/><rect x="1" y="0" width="2" height="2" fill="#f00"/></svg>
<div class="btn" style="left:0px;top:661px;width:22px;height:42px"></div>
<svg style="position:absolute;left:3px;top:678px;" width="15" height="8" viewBox="0 0 15 8" shape-rendering="crispEdges"><rect x="0" y="0" width="2" height="8" fill="#000"/><polygon points="2,4 7,0 7,8" fill="#000"/><polygon points="7,4 12,0 12,8" fill="#000"/></svg>
<div class="btn" style="left:25px;top:661px;width:22px;height:42px"></div>
<svg style="position:absolute;left:30px;top:679px;" width="12" height="8" viewBox="0 0 12 8" shape-rendering="crispEdges"><polygon points="0,4 5,0 5,8" fill="#000"/><rect x="6" y="0" width="2" height="8" fill="#00f"/></svg>
<div style="left:49px;top:661px;width:771px;height:23px;border-left:1px solid #a0a0a0;border-top:1px solid #a0a0a0;background:linear-gradient(#e9e9e9,#f2f2f2 40%,#ededed)"></div>
<div style="left:49px;top:684px;width:771px;height:21px;border-left:1px solid #a0a0a0;border-top:1px solid #a0a0a0;background:linear-gradient(#e9e9e9,#f2f2f2 40%,#ededed)"></div>
<div style="left:49px;top:704px;width:771px;height:1px;background:#fff"></div>
<div style="left:51px;top:663px;width:16px;height:18px;border:1px solid #9a9a9a;border-radius:2px;background:linear-gradient(#f4f4f4 0%,#e6e6e6 45%,#d6d6d6 55%,#cbcbcb 100%)"></div>
<svg style="position:absolute;left:56px;top:668px;" width="4" height="7" viewBox="0 0 4 7" shape-rendering="crispEdges"><polygon points="4,0 0,3.5 4,7" fill="#333"/></svg>
<svg style="position:absolute;left:56px;top:690px;" width="4" height="7" viewBox="0 0 4 7" shape-rendering="crispEdges"><polygon points="4,0 0,3.5 4,7" fill="#333"/></svg>
<div style="left:803px;top:663px;width:16px;height:18px;border:1px solid #9a9a9a;border-radius:2px;background:linear-gradient(#f4f4f4 0%,#e6e6e6 45%,#d6d6d6 55%,#cbcbcb 100%)"></div>
<svg style="position:absolute;left:810px;top:668px;" width="4" height="7" viewBox="0 0 4 7" shape-rendering="crispEdges"><polygon points="0,0 4,3.5 0,7" fill="#333"/></svg>
<svg style="position:absolute;left:810px;top:690px;" width="4" height="7" viewBox="0 0 4 7" shape-rendering="crispEdges"><polygon points="0,0 4,3.5 0,7" fill="#333"/></svg>
<div style="left:745px;top:663px;width:16px;height:18px;border:1px solid #3c7fb1;border-radius:2px;background:linear-gradient(#e3f4fc 0%,#c4e5f6 45%,#a8d8f2 55%,#a6d6f0 100%)"></div>
<div style="left:745px;top:685px;width:16px;height:18px;border:1px solid #9a9a9a;border-radius:2px;background:linear-gradient(#f4f4f4 0%,#e6e6e6 45%,#d6d6d6 55%,#cbcbcb 100%)"></div>
<div class="btn" style="left:823px;top:661px;width:22px;height:42px"></div>
<svg style="position:absolute;left:829px;top:678px;" width="10" height="8" viewBox="0 0 10 8" shape-rendering="crispEdges"><rect x="0" y="0" width="2" height="8" fill="#00f"/><polygon points="4,0 9,4 4,8" fill="#000"/></svg>
<div class="btn" style="left:849px;top:661px;width:22px;height:42px"></div>
<svg style="position:absolute;left:853px;top:678px;" width="15" height="8" viewBox="0 0 15 8" shape-rendering="crispEdges"><polygon points="0,0 5,4 0,8" fill="#000"/><polygon points="5,0 10,4 5,8" fill="#000"/><rect x="11" y="0" width="2" height="8" fill="#000"/></svg>
<div class="btn" style="left:876px;top:661px;width:22px;height:42px"></div>
<svg style="position:absolute;left:879px;top:678px;" width="13" height="8" viewBox="0 0 13 8" shape-rendering="crispEdges"><polygon points="0,4 5,0 5,8" fill="#000"/><rect x="6" y="0" width="2" height="8" fill="#00f"/><rect x="9" y="0" width="2" height="8" fill="#f00"/></svg>
<div class="btn" style="left:902px;top:661px;width:22px;height:42px"></div>
<svg style="position:absolute;left:906px;top:678px;" width="13" height="8" viewBox="0 0 13 8" shape-rendering="crispEdges"><rect x="0" y="0" width="2" height="8" fill="#f00"/><rect x="3" y="0" width="2" height="8" fill="#00f"/><polygon points="7,0 12,4 7,8" fill="#000"/></svg>
<div class="btn" style="left:930px;top:661px;width:58px;height:20px"></div>
<svg style="position:absolute;left:932px;top:661px;" width="18" height="19" viewBox="0 0 18 19" shape-rendering="crispEdges"><g stroke="#ff0" stroke-width="1.2"><line x1="4.5" y1="1" x2="4.5" y2="7.5"/><line x1="0" y1="7" x2="4.5" y2="7"/><line x1="1" y1="2.5" x2="4.5" y2="6.5"/><line x1="1" y1="11" x2="4.5" y2="7.5"/></g><path d="M7,8 V5 Q7,2.5 9.5,2.5 H11.5 Q14,2.5 14,5 V9.5" fill="none" stroke="#000" stroke-width="3.2"/><path d="M7,7.5 V5 Q7,2.5 9.5,2.5 H11.5 Q14,2.5 14,5 V9.5" fill="none" stroke="#e8e8e8" stroke-width="1"/><polygon points="5.5,9.5 15.5,9.5 17.5,11.5 17.5,14.5 15,17 7,17 4.5,14.5 4.5,11.5" fill="#b4b4b4" stroke="#000" stroke-width="1.3"/><g fill="#dcdcdc"><rect x="6" y="11" width="10" height="1"/><rect x="6" y="13" width="10" height="1"/><rect x="7" y="15" width="8" height="1"/></g><rect x="9" y="11" width="4" height="2" fill="#000"/><rect x="10" y="12.5" width="2" height="3.5" fill="#000"/></svg>
<div class="t" style="left:955px;top:665.59px;font-size:12px;line-height:12px;font-weight:700;color:#000;letter-spacing:0.5px">ORI</div>
<div class="btn" style="left:930px;top:684px;width:58px;height:19px"></div>
<svg style="position:absolute;left:932px;top:684px;" width="18" height="19" viewBox="0 0 18 19" shape-rendering="crispEdges"><g stroke="#ff0" stroke-width="1.2"><line x1="4.5" y1="1" x2="4.5" y2="7.5"/><line x1="0" y1="7" x2="4.5" y2="7"/><line x1="1" y1="2.5" x2="4.5" y2="6.5"/><line x1="1" y1="11" x2="4.5" y2="7.5"/></g><path d="M7,8 V5 Q7,2.5 9.5,2.5 H11.5 Q14,2.5 14,5 V9.5" fill="none" stroke="#000" stroke-width="3.2"/><path d="M7,7.5 V5 Q7,2.5 9.5,2.5 H11.5 Q14,2.5 14,5 V9.5" fill="none" stroke="#e8e8e8" stroke-width="1"/><polygon points="5.5,9.5 15.5,9.5 17.5,11.5 17.5,14.5 15,17 7,17 4.5,14.5 4.5,11.5" fill="#b4b4b4" stroke="#000" stroke-width="1.3"/><g fill="#dcdcdc"><rect x="6" y="11" width="10" height="1"/><rect x="6" y="13" width="10" height="1"/><rect x="7" y="15" width="8" height="1"/></g><rect x="9" y="11" width="4" height="2" fill="#000"/><rect x="10" y="12.5" width="2" height="3.5" fill="#000"/></svg>
<div class="t" style="left:955px;top:687.59px;font-size:12px;line-height:12px;font-weight:700;color:#000;letter-spacing:0.2px">MOD</div>
<div class="btn" style="left:992px;top:661px;width:22px;height:42px"></div>
<svg style="position:absolute;left:994px;top:675px;" width="17" height="16" viewBox="0 0 17 16" shape-rendering="crispEdges"><rect x="1" y="0" width="1" height="14" fill="#000"/><rect x="1" y="13" width="16" height="1" fill="#000"/><g fill="#000"><rect x="0" y="2" width="1" height="1"/><rect x="0" y="5" width="1" height="1"/><rect x="0" y="8" width="1" height="1"/><rect x="0" y="11" width="1" height="1"/><rect x="4" y="14" width="1" height="1"/><rect x="8" y="14" width="1" height="1"/><rect x="12" y="14" width="1" height="1"/><rect x="16" y="14" width="1" height="1"/></g><rect x="2" y="3" width="15" height="2" fill="#00f"/><rect x="6" y="1" width="2" height="6" fill="#00f"/><rect x="5" y="2" width="1" height="4" fill="#00f"/><rect x="2" y="9" width="15" height="2" fill="#f00"/><rect x="6" y="7" width="2" height="6" fill="#f00"/><rect x="5" y="8" width="1" height="4" fill="#f00"/></svg>
<div style="left:1022px;top:663px;width:188px;height:41px;border:1px solid #d5dfe5;border-radius:3px"></div>
<div style="left:1029px;top:657px;width:52px;height:10px;background:#f0f0f0"></div>
<div class="t" style="left:1033.2px;top:657.29px;font-size:12px;line-height:12px;font-weight:700;color:#000;letter-spacing:0.2px">Vai a ...</div>
<div class="fld" style="left:1027px;top:675px;width:65px;height:21px;border-top-color:#c9ccd2"></div>
<div class="t" style="left:1031px;top:679.19px;font-size:12px;line-height:12px;font-weight:700;color:#000;letter-spacing:0px">07872C</div>
<svg style="position:absolute;left:1099px;top:678px;" width="17" height="14" viewBox="0 0 17 14" shape-rendering="crispEdges"><rect x="0" y="0" width="3" height="1" fill="#9a9a9a"/><rect x="5" y="0" width="4" height="1" fill="#9a9a9a"/><rect x="0" y="1" width="3" height="1" fill="#9a9a9a"/><rect x="5" y="1" width="4" height="1" fill="#9a9a9a"/><rect x="0" y="2" width="3" height="1" fill="#9a9a9a"/><rect x="4" y="2" width="13" height="1" fill="#9a9a9a"/><rect x="0" y="3" width="17" height="1" fill="#9a9a9a"/><rect x="0" y="4" width="3" height="1" fill="#9a9a9a"/><rect x="4" y="4" width="5" height="1" fill="#9a9a9a"/><rect x="0" y="5" width="3" height="1" fill="#9a9a9a"/><rect x="5" y="5" width="4" height="1" fill="#9a9a9a"/><rect x="0" y="6" width="3" height="1" fill="#9a9a9a"/><rect x="5" y="6" width="4" height="1" fill="#9a9a9a"/><rect x="0" y="7" width="3" height="1" fill="#9a9a9a"/><rect x="5" y="7" width="4" height="1" fill="#9a9a9a"/><rect x="0" y="8" width="3" height="1" fill="#9a9a9a"/><rect x="4" y="8" width="13" height="1" fill="#9a9a9a"/><rect x="0" y="9" width="17" height="1" fill="#9a9a9a"/><rect x="0" y="10" width="3" height="1" fill="#9a9a9a"/><rect x="4" y="10" width="5" height="1" fill="#9a9a9a"/><rect x="0" y="11" width="3" height="1" fill="#9a9a9a"/><rect x="5" y="11" width="4" height="1" fill="#9a9a9a"/><rect x="0" y="12" width="17" height="1" fill="#9a9a9a"/><rect x="1" y="13" width="1" height="1" fill="#9a9a9a"/><rect x="4" y="13" width="1" height="1" fill="#9a9a9a"/><rect x="7" y="13" width="1" height="1" fill="#9a9a9a"/><rect x="10" y="13" width="1" height="1" fill="#9a9a9a"/><rect x="13" y="13" width="1" height="1" fill="#9a9a9a"/></svg>
<svg style="position:absolute;left:1121px;top:678px;" width="17" height="14" viewBox="0 0 17 14" shape-rendering="crispEdges"><rect x="8" y="0" width="4" height="1" fill="#9a9a9a"/><rect x="14" y="0" width="3" height="1" fill="#9a9a9a"/><rect x="8" y="1" width="4" height="1" fill="#9a9a9a"/><rect x="14" y="1" width="3" height="1" fill="#9a9a9a"/><rect x="0" y="2" width="13" height="1" fill="#9a9a9a"/><rect x="14" y="2" width="3" height="1" fill="#9a9a9a"/><rect x="0" y="3" width="17" height="1" fill="#9a9a9a"/><rect x="8" y="4" width="5" height="1" fill="#9a9a9a"/><rect x="14" y="4" width="3" height="1" fill="#9a9a9a"/><rect x="8" y="5" width="4" height="1" fill="#9a9a9a"/><rect x="14" y="5" width="3" height="1" fill="#9a9a9a"/><rect x="8" y="6" width="4" height="1" fill="#9a9a9a"/><rect x="14" y="6" width="3" height="1" fill="#9a9a9a"/><rect x="8" y="7" width="4" height="1" fill="#9a9a9a"/><rect x="14" y="7" width="3" height="1" fill="#9a9a9a"/><rect x="0" y="8" width="13" height="1" fill="#9a9a9a"/><rect x="14" y="8" width="3" height="1" fill="#9a9a9a"/><rect x="0" y="9" width="17" height="1" fill="#9a9a9a"/><rect x="8" y="10" width="5" height="1" fill="#9a9a9a"/><rect x="14" y="10" width="3" height="1" fill="#9a9a9a"/><rect x="8" y="11" width="4" height="1" fill="#9a9a9a"/><rect x="14" y="11" width="3" height="1" fill="#9a9a9a"/><rect x="0" y="12" width="17" height="1" fill="#9a9a9a"/><rect x="3" y="13" width="1" height="1" fill="#9a9a9a"/><rect x="6" y="13" width="1" height="1" fill="#9a9a9a"/><rect x="9" y="13" width="1" height="1" fill="#9a9a9a"/><rect x="12" y="13" width="1" height="1" fill="#9a9a9a"/><rect x="15" y="13" width="1" height="1" fill="#9a9a9a"/></svg>
<div style="left:1144px;top:676px;width:1px;height:18px;background:#a0a0a0"></div>
<div style="left:1147px;top:676px;width:1px;height:18px;background:#a0a0a0"></div>
<svg style="position:absolute;left:1154px;top:678px;" width="16" height="15" viewBox="0 0 16 15" shape-rendering="crispEdges"><rect x="0" y="0" width="2" height="1" fill="#000080"/><rect x="5" y="0" width="2" height="1" fill="#000080"/><rect x="0" y="1" width="3" height="1" fill="#000080"/><rect x="4" y="1" width="3" height="1" fill="#000080"/><rect x="0" y="2" width="7" height="1" fill="#000080"/><rect x="0" y="3" width="2" height="1" fill="#000080"/><rect x="3" y="3" width="1" height="1" fill="#000080"/><rect x="5" y="3" width="2" height="1" fill="#000080"/><rect x="0" y="4" width="2" height="1" fill="#000080"/><rect x="5" y="4" width="2" height="1" fill="#000080"/><rect x="0" y="5" width="2" height="1" fill="#000080"/><rect x="5" y="5" width="2" height="1" fill="#000080"/><rect x="6" y="7" width="1" height="1" fill="#00ffff"/><rect x="5" y="8" width="2" height="1" fill="#00ffff"/><rect x="4" y="9" width="12" height="1" fill="#00ffff"/><rect x="3" y="10" width="13" height="1" fill="#00ffff"/><rect x="4" y="11" width="12" height="1" fill="#00ffff"/><rect x="5" y="12" width="2" height="1" fill="#00ffff"/><rect x="6" y="13" width="1" height="1" fill="#00ffff"/></svg>
<svg style="position:absolute;left:1176px;top:678px;" width="16" height="15" viewBox="0 0 16 15" shape-rendering="crispEdges"><rect x="8" y="0" width="2" height="1" fill="#000080"/><rect x="13" y="0" width="2" height="1" fill="#000080"/><rect x="8" y="1" width="3" height="1" fill="#000080"/><rect x="12" y="1" width="3" height="1" fill="#000080"/><rect x="8" y="2" width="7" height="1" fill="#000080"/><rect x="8" y="3" width="2" height="1" fill="#000080"/><rect x="11" y="3" width="1" height="1" fill="#000080"/><rect x="13" y="3" width="2" height="1" fill="#000080"/><rect x="8" y="4" width="2" height="1" fill="#000080"/><rect x="13" y="4" width="2" height="1" fill="#000080"/><rect x="8" y="5" width="2" height="1" fill="#000080"/><rect x="13" y="5" width="2" height="1" fill="#000080"/><rect x="9" y="7" width="1" height="1" fill="#00ffff"/><rect x="9" y="8" width="2" height="1" fill="#00ffff"/><rect x="0" y="9" width="12" height="1" fill="#00ffff"/><rect x="0" y="10" width="13" height="1" fill="#00ffff"/><rect x="0" y="11" width="12" height="1" fill="#00ffff"/><rect x="9" y="12" width="2" height="1" fill="#00ffff"/><rect x="9" y="13" width="1" height="1" fill="#00ffff"/></svg>
<div style="left:0px;top:707px;width:1339px;height:1px;background:#a0a0a0"></div>
<div style="left:0px;top:708px;width:1339px;height:14px;background:#f0edeb;border-top:1px solid #fff"></div>
<div style="left:346px;top:709px;width:1px;height:13px;background:#d5d2cf"></div>
<div style="left:566px;top:709px;width:1px;height:13px;background:#d5d2cf"></div>
<div style="left:666px;top:709px;width:1px;height:13px;background:#d5d2cf"></div>
<div class="t" style="left:671.4px;top:711.99px;font-size:12px;line-height:12px;font-weight:400;color:#000;">Checksum: 9</div></body></html>
